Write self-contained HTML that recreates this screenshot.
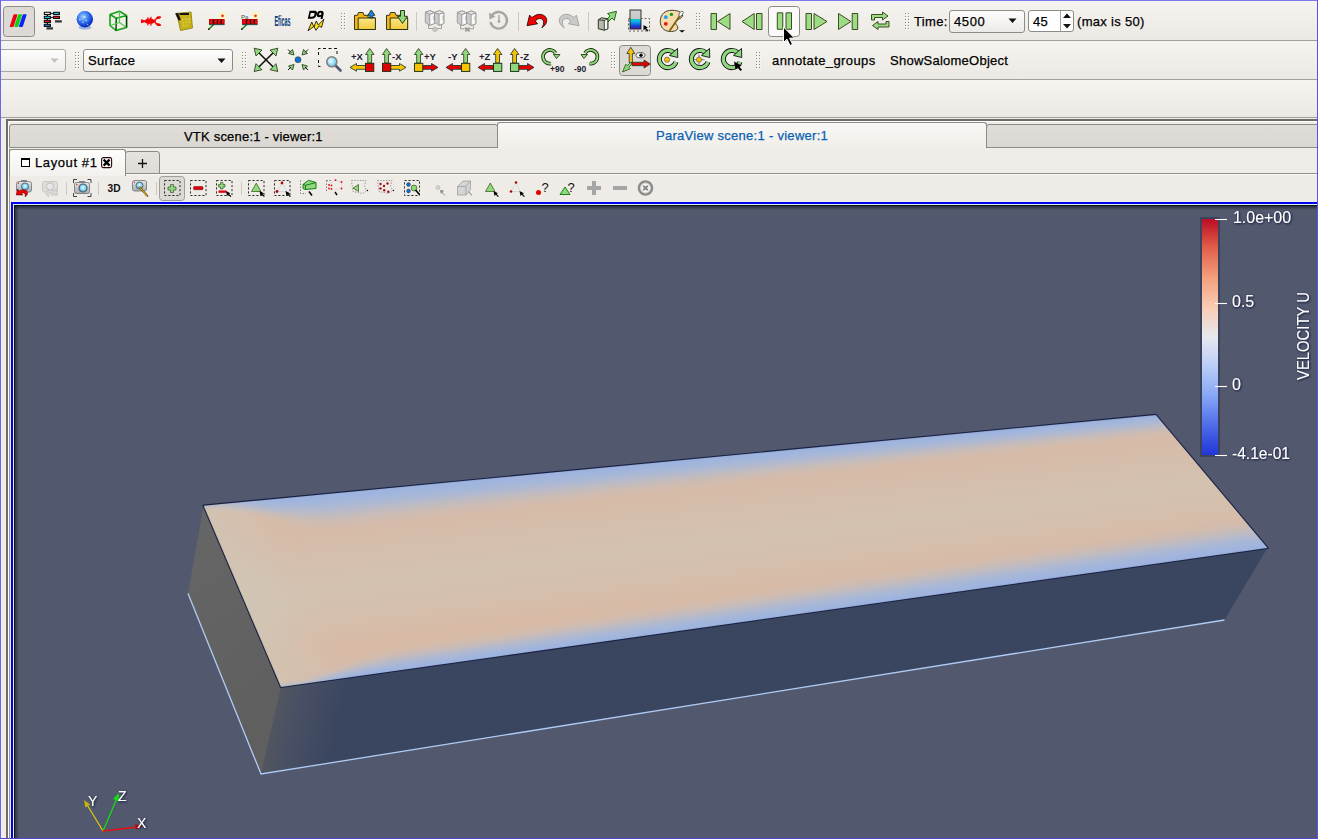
<!DOCTYPE html>
<html><head><meta charset="utf-8">
<style>
*{box-sizing:border-box;margin:0;padding:0}
html,body{width:1318px;height:839px;overflow:hidden;background:#f0ede8;font-family:"Liberation Sans",sans-serif;}
.a{position:absolute}
.tb{position:absolute;left:1px;right:1px;background:linear-gradient(#f6f4f0,#ece9e4)}
.hl{position:absolute;left:1px;right:1px;height:1px;background:#a3a09b}
.txt{position:absolute;font-size:13px;color:#000;white-space:nowrap;line-height:16px;-webkit-text-stroke:0.25px currentColor}
.grip{position:absolute;width:3px;background-image:radial-gradient(circle,#a8a59f 0.6px,transparent 0.9px);background-size:3px 3px}
.vsep{position:absolute;width:1px;background:#c9c6c0;box-shadow:1px 0 0 #fff}
svg{position:absolute;overflow:visible}
</style></head><body>
<!-- toolbar rows -->
<div class="tb" style="top:1px;height:39px"></div>
<div class="hl" style="top:40px"></div>
<div class="tb" style="top:41px;height:38px"></div>
<div class="hl" style="top:79px"></div>
<div class="tb" style="top:80px;height:37px"></div>
<div class="hl" style="top:117px"></div>

<!-- ROW1 ICONS -->
<svg class="a" style="left:0;top:0" width="1318" height="120" viewBox="0 0 1318 120">
<defs>
<radialGradient id="glb" cx="0.4" cy="0.35" r="0.7"><stop offset="0" stop-color="#a8d0ff"/><stop offset="0.45" stop-color="#3a7ef0"/><stop offset="0.85" stop-color="#0a30c8"/><stop offset="1" stop-color="#0818a0"/></radialGradient>
<linearGradient id="fold" x1="0" y1="0" x2="0" y2="1"><stop offset="0" stop-color="#fce68a"/><stop offset="1" stop-color="#f2cc3a"/></linearGradient>
<linearGradient id="cbi" x1="0" y1="0" x2="0" y2="1"><stop offset="0" stop-color="#d0d0d0"/><stop offset="0.45" stop-color="#c8c8c8"/><stop offset="0.47" stop-color="#10d0a0"/><stop offset="0.6" stop-color="#10b0f0"/><stop offset="0.85" stop-color="#1040d0"/><stop offset="1" stop-color="#6010a0"/></linearGradient>
<pattern id="grip" width="3" height="3" patternUnits="userSpaceOnUse"><rect x="0.5" y="0.5" width="1" height="1" fill="#a4a19b"/></pattern>
</defs>
<!-- active paraview button -->
<rect x="3.5" y="6.5" width="31" height="30" rx="3" fill="#dddad5" stroke="#8e8c88"/>
<g transform="skewX(-18)">
<rect x="18.3" y="14.3" width="4" height="12.8" rx="0.8" fill="#f00010"/>
<rect x="22.9" y="14.3" width="4" height="12.8" rx="0.8" fill="#10d010"/>
<rect x="27.5" y="14.3" width="4" height="12.8" rx="0.8" fill="#1020f8"/>
</g>
<!-- tree icon -->
<g fill="#111">
<rect x="46.5" y="27.3" width="6.5" height="2.2" opacity="0.85"/>
<rect x="55" y="20.3" width="6.8" height="2.2" opacity="0.85"/>
<rect x="43.8" y="11.8" width="7.2" height="3.2" rx="0.6"/><rect x="53" y="11.8" width="7" height="3.2" rx="0.6"/>
<rect x="43.8" y="15.8" width="7.2" height="3.2" rx="0.6"/><rect x="53" y="15.8" width="7" height="3.2" rx="0.6"/>
<rect x="43.8" y="19.8" width="7.2" height="3.2" rx="0.6"/>
<rect x="43.8" y="23.8" width="7.2" height="3.2" rx="0.6"/>
<rect x="50.5" y="12.9" width="3" height="1"/><rect x="50.5" y="16.9" width="3" height="1"/>
<rect x="46.8" y="14.5" width="1.2" height="10"/>
</g>
<rect x="45" y="12.8" width="4.8" height="1.2" fill="#e8e8e8"/><rect x="54.2" y="12.8" width="4.6" height="1.2" fill="#18c0f8"/>
<rect x="45" y="16.8" width="4.8" height="1.2" fill="#18c0f8"/><rect x="54.2" y="16.8" width="4.6" height="1.2" fill="#f81020"/>
<rect x="45" y="20.8" width="4.8" height="1.2" fill="#f81020"/>
<rect x="45" y="24.8" width="4.8" height="1.2" fill="#1070e0"/>
<!-- globe -->
<ellipse cx="85" cy="27.5" rx="6.5" ry="2" fill="#6890d8" opacity="0.6"/>
<circle cx="84.8" cy="19.3" r="8.2" fill="url(#glb)"/>
<g fill="#fff" opacity="0.85"><circle cx="84.6" cy="16.9" r="0.8"/><circle cx="79.8" cy="19.6" r="0.7"/><circle cx="86.3" cy="20.6" r="0.7"/><circle cx="83" cy="22.3" r="0.6"/><circle cx="87.7" cy="24.3" r="0.6"/></g>
<!-- wire cube -->
<g fill="none" stroke="#18a018" stroke-width="1.6" stroke-linejoin="round">
<polyline points="110,14.5 119.5,11.2 126.5,15.5 116.3,18.2 110,14.5 110,25.5 116,30.5 126.5,27.5 126.5,15.5"/>
<polyline points="116.3,18.2 116,30.5" stroke="#0a600a"/>
<polyline points="119.5,11.2 119.5,22.5 110,25.5" stroke="#50c850" stroke-width="1.2"/>
<line x1="119.5" y1="22.5" x2="126.5" y2="27.5" stroke="#50c850" stroke-width="1.2"/>
</g>
<line x1="126.6" y1="16" x2="126.6" y2="27.5" stroke="#063006" stroke-width="1.2"/>
<!-- lobster -->
<g fill="#f40000">
<path d="M141,19.3 L144.5,20.3 L147,19 L152.5,19.5 L155.5,21.2 L152.5,23 L147,23.5 L144.5,22.2 L141,23.2 Z"/>
<ellipse cx="150" cy="21.2" rx="4.2" ry="2.6"/>
<path d="M153.5,20.8 L155.5,18.5 L157.5,16.3 L160.5,16.3 L161.3,17.5 L159.5,18.8 L156.5,19.3 L155.5,21.3Z"/>
<path d="M153.5,21.6 L155.5,23.9 L157.5,26.1 L160.5,26.1 L161.3,24.9 L159.5,23.6 L156.5,23.1 L155.5,21.1Z"/>
<rect x="147.3" y="17.3" width="1.2" height="2"/><rect x="150.3" y="16.8" width="1.2" height="2.4"/><rect x="147.3" y="23.3" width="1.2" height="2"/><rect x="150.3" y="23.3" width="1.2" height="2.4"/>
</g>
<!-- calculator -->
<path d="M175.5,13.5 L191,12 L192.5,28 L180.5,30.5 L178,19 Z" fill="#c8b418" stroke="#8a7a08" stroke-width="0.8"/>
<path d="M175.5,13.5 L178,12.8 L181,20 L178.5,20.5Z" fill="#111"/>
<rect x="179.5" y="13" width="9.5" height="2" fill="#111"/>
<g fill="#e4d870" opacity="0.9"><rect x="182" y="19" width="1.5" height="1.2"/><rect x="185" y="18.7" width="1.5" height="1.2"/><rect x="188" y="18.4" width="1.5" height="1.2"/><rect x="182.5" y="22" width="1.5" height="1.2"/><rect x="185.5" y="21.7" width="1.5" height="1.2"/><rect x="188.5" y="21.4" width="1.5" height="1.2"/><rect x="183" y="25" width="1.5" height="1.2"/><rect x="186" y="24.7" width="1.5" height="1.2"/></g>
<!-- red bar icons -->
<g id="rb1">
<circle cx="222.5" cy="15.8" r="4" fill="#fff6b8" opacity="0.75"/>
<line x1="208.7" y1="29.3" x2="214" y2="24.3" stroke="#108010" stroke-width="1.5"/>
<circle cx="208.8" cy="29.3" r="0.8" fill="#000"/>
<rect x="209" y="19" width="15.6" height="5.4" fill="#d00008"/>
<g fill="#200000"><rect x="213.2" y="19" width="0.9" height="5.4"/><rect x="217.2" y="19" width="0.9" height="5.4"/><rect x="220.8" y="19" width="0.9" height="5.4"/><rect x="209" y="21.4" width="15.6" height="0.6" opacity="0.5"/></g>
<g fill="#ff2020" opacity="0.7"><circle cx="211" cy="21.5" r="1.2"/><circle cx="215.5" cy="21.5" r="1.1"/><circle cx="219" cy="21.5" r="1.1"/><circle cx="223" cy="21.5" r="1.1"/></g>
<rect x="209" y="24.2" width="15.6" height="0.9" fill="#104040"/>
<circle cx="222.5" cy="15.8" r="1.4" fill="#f03818"/>
</g>
<use href="#rb1" x="33"/>
<text x="241" y="18.5" font-family="Liberation Sans" font-weight="bold" font-size="6" fill="#708080">Pa</text>
<!-- Eficas -->
<text x="274.5" y="26" font-family="Liberation Sans" font-weight="bold" font-size="10.5" fill="#0a3a7a" textLength="16" lengthAdjust="spacingAndGlyphs" transform="translate(0,-9) scale(1,1.35)">Eficas</text>
<!-- DA -->
<path d="M309.6,10.8 L314.5,10.8 C317,10.8 317.3,12.5 316.8,14.5 C316.2,17 314.5,18.8 311.5,18.8 L307.8,18.8Z M310.8,13 L309.9,16.8 L311.8,16.8 C313.6,16.8 314.3,15.5 314.5,14.3 C314.7,13.3 314.3,13 313.3,13Z" fill="#000" fill-rule="evenodd"/><path d="M320.5,10.8 C323,10.8 324,12 323.6,14 L322.6,19 L320.5,19 L321,16.7 C320.5,17 319.8,17.2 319,17.2 C317,17.2 316.6,15.8 317,14 C317.4,12 318.5,10.8 320.5,10.8Z M320.3,12.8 C319.6,12.8 319.2,13.4 319.1,14 C319,14.7 319.2,15.2 319.9,15.2 C320.7,15.2 321.2,14.7 321.3,14 C321.4,13.3 321.1,12.8 320.3,12.8Z" fill="#000" fill-rule="evenodd"/>
<path d="M308,30.8 L311.8,22 L313.8,27 L316.3,21 L318.3,25 L323.8,19.3 L321.5,27.5 L319.2,25.8 L316,30.3 L313.8,26.5 Z" fill="#f8e010" stroke="#201800" stroke-width="0.9" stroke-linejoin="round"/>
<!-- grips row1 -->
<rect x="341" y="13" width="1" height="1" fill="#8c8a86"/><rect x="342" y="14" width="1" height="1" fill="#fff"/><rect x="344" y="13" width="1" height="1" fill="#8c8a86"/><rect x="345" y="14" width="1" height="1" fill="#fff"/><rect x="341" y="16" width="1" height="1" fill="#8c8a86"/><rect x="342" y="17" width="1" height="1" fill="#fff"/><rect x="344" y="16" width="1" height="1" fill="#8c8a86"/><rect x="345" y="17" width="1" height="1" fill="#fff"/><rect x="341" y="19" width="1" height="1" fill="#8c8a86"/><rect x="342" y="20" width="1" height="1" fill="#fff"/><rect x="344" y="19" width="1" height="1" fill="#8c8a86"/><rect x="345" y="20" width="1" height="1" fill="#fff"/><rect x="341" y="22" width="1" height="1" fill="#8c8a86"/><rect x="342" y="23" width="1" height="1" fill="#fff"/><rect x="344" y="22" width="1" height="1" fill="#8c8a86"/><rect x="345" y="23" width="1" height="1" fill="#fff"/><rect x="341" y="25" width="1" height="1" fill="#8c8a86"/><rect x="342" y="26" width="1" height="1" fill="#fff"/><rect x="344" y="25" width="1" height="1" fill="#8c8a86"/><rect x="345" y="26" width="1" height="1" fill="#fff"/><rect x="341" y="28" width="1" height="1" fill="#8c8a86"/><rect x="342" y="29" width="1" height="1" fill="#fff"/><rect x="344" y="28" width="1" height="1" fill="#8c8a86"/><rect x="345" y="29" width="1" height="1" fill="#fff"/><rect x="696" y="13" width="1" height="1" fill="#8c8a86"/><rect x="697" y="14" width="1" height="1" fill="#fff"/><rect x="699" y="13" width="1" height="1" fill="#8c8a86"/><rect x="700" y="14" width="1" height="1" fill="#fff"/><rect x="696" y="16" width="1" height="1" fill="#8c8a86"/><rect x="697" y="17" width="1" height="1" fill="#fff"/><rect x="699" y="16" width="1" height="1" fill="#8c8a86"/><rect x="700" y="17" width="1" height="1" fill="#fff"/><rect x="696" y="19" width="1" height="1" fill="#8c8a86"/><rect x="697" y="20" width="1" height="1" fill="#fff"/><rect x="699" y="19" width="1" height="1" fill="#8c8a86"/><rect x="700" y="20" width="1" height="1" fill="#fff"/><rect x="696" y="22" width="1" height="1" fill="#8c8a86"/><rect x="697" y="23" width="1" height="1" fill="#fff"/><rect x="699" y="22" width="1" height="1" fill="#8c8a86"/><rect x="700" y="23" width="1" height="1" fill="#fff"/><rect x="696" y="25" width="1" height="1" fill="#8c8a86"/><rect x="697" y="26" width="1" height="1" fill="#fff"/><rect x="699" y="25" width="1" height="1" fill="#8c8a86"/><rect x="700" y="26" width="1" height="1" fill="#fff"/><rect x="696" y="28" width="1" height="1" fill="#8c8a86"/><rect x="697" y="29" width="1" height="1" fill="#fff"/><rect x="699" y="28" width="1" height="1" fill="#8c8a86"/><rect x="700" y="29" width="1" height="1" fill="#fff"/><rect x="905" y="13" width="1" height="1" fill="#8c8a86"/><rect x="906" y="14" width="1" height="1" fill="#fff"/><rect x="908" y="13" width="1" height="1" fill="#8c8a86"/><rect x="909" y="14" width="1" height="1" fill="#fff"/><rect x="905" y="16" width="1" height="1" fill="#8c8a86"/><rect x="906" y="17" width="1" height="1" fill="#fff"/><rect x="908" y="16" width="1" height="1" fill="#8c8a86"/><rect x="909" y="17" width="1" height="1" fill="#fff"/><rect x="905" y="19" width="1" height="1" fill="#8c8a86"/><rect x="906" y="20" width="1" height="1" fill="#fff"/><rect x="908" y="19" width="1" height="1" fill="#8c8a86"/><rect x="909" y="20" width="1" height="1" fill="#fff"/><rect x="905" y="22" width="1" height="1" fill="#8c8a86"/><rect x="906" y="23" width="1" height="1" fill="#fff"/><rect x="908" y="22" width="1" height="1" fill="#8c8a86"/><rect x="909" y="23" width="1" height="1" fill="#fff"/><rect x="905" y="25" width="1" height="1" fill="#8c8a86"/><rect x="906" y="26" width="1" height="1" fill="#fff"/><rect x="908" y="25" width="1" height="1" fill="#8c8a86"/><rect x="909" y="26" width="1" height="1" fill="#fff"/><rect x="905" y="28" width="1" height="1" fill="#8c8a86"/><rect x="906" y="29" width="1" height="1" fill="#fff"/><rect x="908" y="28" width="1" height="1" fill="#8c8a86"/><rect x="909" y="29" width="1" height="1" fill="#fff"/>
<!-- folders -->
<g stroke="#1a2a10" stroke-width="0.9" stroke-linejoin="round">
<path d="M354.5,29.5 L354.5,15.3 L357.5,15.3 L358.5,12.5 L363,12.5 L364,15.3 L368,15.3 L368,17.8 L375.2,17.8 L375.2,29.5Z" fill="#f6b418"/>
<path d="M358.2,29.5 L358.2,18 L375.4,18 L375.4,29.5Z" fill="url(#fold)"/>
<path d="M371.3,10 L374.8,15.3 L372.7,15.3 L372.7,17.8 L369.9,17.8 L369.9,15.3 L367.8,15.3Z" fill="#1888f0"/>
<path d="M386.5,29.5 L386.5,15.3 L389.5,15.3 L390.5,12.5 L395,12.5 L396,15.3 L400,15.3 L400,17.8 L407.5,17.8 L407.5,29.5Z" fill="#f6b418"/>
<path d="M390.2,29.5 L390.2,18 L407.7,18 L407.7,29.5Z" fill="url(#fold)"/>
<path d="M400.5,10.5 L404.5,10.5 L404.5,16.3 L407.5,16.3 L402.5,23.5 L397.5,16.3 L400.5,16.3Z" fill="#90d880"/>
</g>
<!-- separators -->
<g stroke="#cbc8c2" stroke-width="1"><line x1="416.5" y1="12" x2="416.5" y2="31"/><line x1="518.5" y1="12" x2="518.5" y2="31"/><line x1="588.5" y1="12" x2="588.5" y2="31"/></g>
<!-- disabled servers -->
<g id="srv" stroke="#999" stroke-width="0.9" stroke-linejoin="round">
<polyline points="428.5,24.5 428.5,28.5 441.5,28.5 441.5,25" fill="none"/>
<path d="M434.6,12.5 L439.4,10.6 L443.8,12.5 L443.8,23.5 L439.1,25.3 L434.6,22.5Z" fill="#cbcbca"/>
<path d="M439.1,14.2 L443.8,12.5 L443.8,23.5 L439.1,25.3Z" fill="#f8f8f8"/>
<path d="M434.6,12.5 L439.4,10.6 L443.8,12.5 L439.1,14.2Z" fill="#e4e4e4"/>
<path d="M425.3,12.2 L430.1,10.6 L434.5,12.5 L434.5,23.5 L429.8,25.3 L425.3,22.5Z" fill="#cbcbca"/>
<path d="M429.8,14.2 L434.5,12.5 L434.5,23.5 L429.8,25.3Z" fill="#f8f8f8"/>
<path d="M425.3,12.2 L430.1,10.6 L434.5,12.5 L429.8,14.2Z" fill="#e4e4e4"/>
</g>
<g fill="#aaa"><rect x="433" y="16.3" width="1" height="1.2"/><rect x="433" y="18.3" width="1" height="1.2"/><rect x="442.3" y="16.3" width="1" height="1.2"/><rect x="442.3" y="18.3" width="1" height="1.2"/></g>
<circle cx="435" cy="29.3" r="2.3" fill="#c8c8c8" stroke="#aaa" stroke-width="0.6"/>
<use href="#srv" x="32" y="0.3"/>
<g fill="#aaa"><rect x="465" y="16.6" width="1" height="1.2"/><rect x="465" y="18.6" width="1" height="1.2"/><rect x="474.3" y="16.6" width="1" height="1.2"/><rect x="474.3" y="18.6" width="1" height="1.2"/></g>
<path d="M465.3,27.6 L469.7,31.4 M469.7,27.6 L465.3,31.4" stroke="#999" stroke-width="1.8"/>
<!-- timer reset -->
<path d="M491.5,16 A8.3,8.3 0 1 1 490.5,22" fill="none" stroke="#a6a6a6" stroke-width="2.4"/>
<path d="M489,12.5 L495.5,16.5 L489.5,19.5Z" fill="#a6a6a6"/>
<line x1="499" y1="15" x2="499" y2="21" stroke="#a6a6a6" stroke-width="1.4"/><circle cx="499" cy="21.5" r="1.4" fill="#a6a6a6"/>
<!-- undo -->
<path d="M527,25.7 L529.6,15.1 L532,17.6 C535,15 538.5,13.8 541.5,14.5 C545,15.3 547,18 546.7,21 C546.4,24 544,26.5 541.8,27.8 C543,26 544,23.5 543.5,21.2 C543,19.2 541,18.3 539,18.6 C537.5,18.9 536.3,19.8 535.3,21.2 L537.6,23.8 Z" fill="#f00000" stroke="#1a0000" stroke-width="0.8" stroke-linejoin="round"/>
<!-- redo -->
<path d="M 579.0 25.7 L 576.4 15.1 L 574.0 17.6 C 571.0 15.0 567.5 13.8 564.5 14.5 C 561.0 15.3 559.0 18.0 559.3 21.0 C 559.6 24.0 562.0 26.5 564.2 27.8 C 563.0 26.0 562.0 23.5 562.5 21.2 C 563.0 19.2 565.0 18.3 567.0 18.6 C 568.5 18.9 569.7 19.8 570.7 21.2 L 568.4 23.8 Z" fill="#cacaca" stroke="#9a9a9a" stroke-width="0.8" stroke-linejoin="round"/>
<!-- green arrow box -->
<path d="M603.5,22.5 L610,16 L607.5,13.5 L616.5,11.3 L614.3,20.3 L612,18 L605.5,24.5Z" fill="#90d880" stroke="#1a5a10" stroke-width="0.9" stroke-linejoin="round"/>
<path d="M598.3,19.8 L601.5,17.8 L607.8,18.8 L607.8,28.8 L604.3,30.2 L598.3,28.8Z" fill="#b8b8ac" stroke="#1a2a10" stroke-width="0.9" stroke-linejoin="round"/>
<path d="M604.3,20.5 L607.8,18.8 L607.8,28.8 L604.3,30.2Z" fill="#f8f8f8" stroke="#1a2a10" stroke-width="0.8" stroke-linejoin="round"/>
<path d="M598.3,19.8 L604.3,20.5" stroke="#1a2a10" stroke-width="0.8"/>
<!-- colorbar icon -->
<rect x="628.5" y="18.5" width="21" height="12.5" fill="none" stroke="#606060" stroke-dasharray="2,2"/>
<rect x="630" y="10" width="11" height="19" fill="url(#cbi)" stroke="#202020" stroke-width="0.9"/>
<path d="M643.5,25 L643.5,30.5 L645,29 L647.5,31.5 L648.5,30.5 L646,28 L648,27.5Z" fill="#000"/>
<!-- palette -->
<path d="M672,10.3 C679,10.3 683,13 682.5,16 C682,19 676,19 675.5,22 C675,25 679,26 677.5,29 C676,31.5 671,32 667,31 C662,29.5 660,25 660.3,20.5 C660.8,14 665,10.3 672,10.3Z" fill="#f6dcaa" stroke="#302818" stroke-width="0.9"/>
<circle cx="665.8" cy="17.2" r="1.9" fill="#20a0f0"/><circle cx="671.4" cy="14.4" r="1.7" fill="#10a020"/><circle cx="665.8" cy="23.8" r="1.9" fill="#f01010"/>
<line x1="669.5" y1="31" x2="680" y2="15.5" stroke="#806010" stroke-width="1.8"/>
<ellipse cx="681" cy="13.8" rx="1.6" ry="3" transform="rotate(35 681 13.8)" fill="#fff" stroke="#404040" stroke-width="0.7"/>
<path d="M679,30.3 L685,30.3 L682,32.5Z" fill="#000"/>
<!-- VCR -->
<g fill="#9cdc84" stroke="#2e3a10" stroke-width="0.9" stroke-linejoin="round">
<rect x="711" y="13.5" width="5.5" height="16"/><path d="M717.5,21.5 L730,13.5 L730,29.5Z"/>
<path d="M742,21.5 L754.2,13.5 L754.2,29.5Z"/><rect x="756.5" y="13.5" width="5.5" height="16"/>
</g>
<rect x="768.5" y="6.5" width="31" height="30" rx="3" fill="#fbfaf8" stroke="#8a8884"/>
<g fill="#9cdc84" stroke="#2e3a10" stroke-width="0.9" stroke-linejoin="round">
<rect x="777.3" y="12.8" width="5.5" height="16.5"/><rect x="786" y="12.8" width="5.5" height="16.5"/>
<rect x="806" y="13.5" width="5.5" height="16"/><path d="M814,13.5 L827,21.5 L814,29.5Z"/>
<path d="M838.5,13.5 L851,21.5 L838.5,29.5Z"/><rect x="852.2" y="13.5" width="5.5" height="16"/>
<path d="M871.5,20 L871.5,14.5 L882.5,14.5 L882.5,12 L888,16 L882.5,20 L882.5,17.5 L874.5,17.5 L874.5,20Z"/>
<path d="M889,21.5 L889,27 L878,27 L878,29.5 L872.5,25.5 L878,21.5 L878,24 L886,24 L886,21.5Z"/>
</g>
</svg>
<!-- time widgets -->
<div class="txt" style="left:914px;top:14px;letter-spacing:0.35px">Time:</div>
<div class="a" style="left:949px;top:10px;width:76px;height:23px;border:1px solid #8f8c86;border-radius:3px;background:linear-gradient(#fdfdfc,#eceae6)"></div>
<div class="txt" style="left:954px;top:14px;letter-spacing:0.6px">4500</div>
<svg class="a" style="left:1008px;top:18px" width="10" height="6"><path d="M0.5,0.5 L8.5,0.5 L4.5,5Z" fill="#111"/></svg>
<div class="a" style="left:1028px;top:10px;width:46px;height:22px;border:1px solid #8f8c86;border-radius:3px;background:#fff"></div>
<div class="a" style="left:1060px;top:11px;width:1px;height:20px;background:#a8a59f"></div>
<div class="txt" style="left:1033px;top:14px;letter-spacing:0.3px">45</div>
<svg class="a" style="left:1062px;top:12px" width="11" height="20"><path d="M1,6 L9,6 L5,1.5Z M1,12 L9,12 L5,16.5Z" fill="#111"/></svg>
<div class="txt" style="left:1077px;top:14px;letter-spacing:0.3px">(max is 50)</div>
<!-- cursor -->
<svg class="a" style="left:782px;top:26px" width="16" height="22" viewBox="0 0 16 22"><path d="M1.5,1 L1.5,16.5 L5,13.2 L8,19.5 L10.5,18.3 L7.6,12.2 L12.5,12.2Z" fill="#000" stroke="#fff" stroke-width="1" stroke-linejoin="round"/></svg>


<!-- ROW2 -->
<!-- left clipped combobox -->
<div class="a" style="left:-10px;top:49px;width:76px;height:23px;border:1px solid #a9a6a0;border-radius:3px;background:linear-gradient(#fdfdfc,#efedea)"></div>
<svg class="a" style="left:50px;top:58px" width="10" height="6"><path d="M0.5,0.5 L8.5,0.5 L4.5,5Z" fill="#c4c2be"/></svg>
<div class="a" style="left:83px;top:49px;width:150px;height:23px;border:1px solid #8f8c86;border-radius:3px;background:linear-gradient(#fefefe,#eeece8)"></div>
<div class="txt" style="left:88px;top:53px;letter-spacing:0.35px">Surface</div>
<svg class="a" style="left:217px;top:58px" width="10" height="6"><path d="M0.5,0.5 L8.5,0.5 L4.5,5Z" fill="#111"/></svg>
<div class="txt" style="left:772px;top:53px;letter-spacing:0.4px">annotate_groups</div>
<div class="txt" style="left:890px;top:53px;letter-spacing:0.25px">ShowSalomeObject</div>
<svg class="a" style="left:0;top:0" width="1318" height="120" viewBox="0 0 1318 120">
<defs>
<pattern id="grip2" width="3" height="3" patternUnits="userSpaceOnUse"><rect x="0.5" y="0.5" width="1" height="1" fill="#a4a19b"/></pattern>
<radialGradient id="mag" cx="0.4" cy="0.4" r="0.6"><stop offset="0" stop-color="#f0fcff"/><stop offset="1" stop-color="#60c8f8"/></radialGradient>
</defs>
<rect x="75" y="52" width="1" height="1" fill="#8c8a86"/><rect x="76" y="53" width="1" height="1" fill="#fff"/><rect x="78" y="52" width="1" height="1" fill="#8c8a86"/><rect x="79" y="53" width="1" height="1" fill="#fff"/><rect x="75" y="55" width="1" height="1" fill="#8c8a86"/><rect x="76" y="56" width="1" height="1" fill="#fff"/><rect x="78" y="55" width="1" height="1" fill="#8c8a86"/><rect x="79" y="56" width="1" height="1" fill="#fff"/><rect x="75" y="58" width="1" height="1" fill="#8c8a86"/><rect x="76" y="59" width="1" height="1" fill="#fff"/><rect x="78" y="58" width="1" height="1" fill="#8c8a86"/><rect x="79" y="59" width="1" height="1" fill="#fff"/><rect x="75" y="61" width="1" height="1" fill="#8c8a86"/><rect x="76" y="62" width="1" height="1" fill="#fff"/><rect x="78" y="61" width="1" height="1" fill="#8c8a86"/><rect x="79" y="62" width="1" height="1" fill="#fff"/><rect x="75" y="64" width="1" height="1" fill="#8c8a86"/><rect x="76" y="65" width="1" height="1" fill="#fff"/><rect x="78" y="64" width="1" height="1" fill="#8c8a86"/><rect x="79" y="65" width="1" height="1" fill="#fff"/><rect x="75" y="67" width="1" height="1" fill="#8c8a86"/><rect x="76" y="68" width="1" height="1" fill="#fff"/><rect x="78" y="67" width="1" height="1" fill="#8c8a86"/><rect x="79" y="68" width="1" height="1" fill="#fff"/><rect x="242" y="52" width="1" height="1" fill="#8c8a86"/><rect x="243" y="53" width="1" height="1" fill="#fff"/><rect x="245" y="52" width="1" height="1" fill="#8c8a86"/><rect x="246" y="53" width="1" height="1" fill="#fff"/><rect x="242" y="55" width="1" height="1" fill="#8c8a86"/><rect x="243" y="56" width="1" height="1" fill="#fff"/><rect x="245" y="55" width="1" height="1" fill="#8c8a86"/><rect x="246" y="56" width="1" height="1" fill="#fff"/><rect x="242" y="58" width="1" height="1" fill="#8c8a86"/><rect x="243" y="59" width="1" height="1" fill="#fff"/><rect x="245" y="58" width="1" height="1" fill="#8c8a86"/><rect x="246" y="59" width="1" height="1" fill="#fff"/><rect x="242" y="61" width="1" height="1" fill="#8c8a86"/><rect x="243" y="62" width="1" height="1" fill="#fff"/><rect x="245" y="61" width="1" height="1" fill="#8c8a86"/><rect x="246" y="62" width="1" height="1" fill="#fff"/><rect x="242" y="64" width="1" height="1" fill="#8c8a86"/><rect x="243" y="65" width="1" height="1" fill="#fff"/><rect x="245" y="64" width="1" height="1" fill="#8c8a86"/><rect x="246" y="65" width="1" height="1" fill="#fff"/><rect x="242" y="67" width="1" height="1" fill="#8c8a86"/><rect x="243" y="68" width="1" height="1" fill="#fff"/><rect x="245" y="67" width="1" height="1" fill="#8c8a86"/><rect x="246" y="68" width="1" height="1" fill="#fff"/><rect x="611" y="52" width="1" height="1" fill="#8c8a86"/><rect x="612" y="53" width="1" height="1" fill="#fff"/><rect x="614" y="52" width="1" height="1" fill="#8c8a86"/><rect x="615" y="53" width="1" height="1" fill="#fff"/><rect x="611" y="55" width="1" height="1" fill="#8c8a86"/><rect x="612" y="56" width="1" height="1" fill="#fff"/><rect x="614" y="55" width="1" height="1" fill="#8c8a86"/><rect x="615" y="56" width="1" height="1" fill="#fff"/><rect x="611" y="58" width="1" height="1" fill="#8c8a86"/><rect x="612" y="59" width="1" height="1" fill="#fff"/><rect x="614" y="58" width="1" height="1" fill="#8c8a86"/><rect x="615" y="59" width="1" height="1" fill="#fff"/><rect x="611" y="61" width="1" height="1" fill="#8c8a86"/><rect x="612" y="62" width="1" height="1" fill="#fff"/><rect x="614" y="61" width="1" height="1" fill="#8c8a86"/><rect x="615" y="62" width="1" height="1" fill="#fff"/><rect x="611" y="64" width="1" height="1" fill="#8c8a86"/><rect x="612" y="65" width="1" height="1" fill="#fff"/><rect x="614" y="64" width="1" height="1" fill="#8c8a86"/><rect x="615" y="65" width="1" height="1" fill="#fff"/><rect x="611" y="67" width="1" height="1" fill="#8c8a86"/><rect x="612" y="68" width="1" height="1" fill="#fff"/><rect x="614" y="67" width="1" height="1" fill="#8c8a86"/><rect x="615" y="68" width="1" height="1" fill="#fff"/><rect x="756" y="52" width="1" height="1" fill="#8c8a86"/><rect x="757" y="53" width="1" height="1" fill="#fff"/><rect x="759" y="52" width="1" height="1" fill="#8c8a86"/><rect x="760" y="53" width="1" height="1" fill="#fff"/><rect x="756" y="55" width="1" height="1" fill="#8c8a86"/><rect x="757" y="56" width="1" height="1" fill="#fff"/><rect x="759" y="55" width="1" height="1" fill="#8c8a86"/><rect x="760" y="56" width="1" height="1" fill="#fff"/><rect x="756" y="58" width="1" height="1" fill="#8c8a86"/><rect x="757" y="59" width="1" height="1" fill="#fff"/><rect x="759" y="58" width="1" height="1" fill="#8c8a86"/><rect x="760" y="59" width="1" height="1" fill="#fff"/><rect x="756" y="61" width="1" height="1" fill="#8c8a86"/><rect x="757" y="62" width="1" height="1" fill="#fff"/><rect x="759" y="61" width="1" height="1" fill="#8c8a86"/><rect x="760" y="62" width="1" height="1" fill="#fff"/><rect x="756" y="64" width="1" height="1" fill="#8c8a86"/><rect x="757" y="65" width="1" height="1" fill="#fff"/><rect x="759" y="64" width="1" height="1" fill="#8c8a86"/><rect x="760" y="65" width="1" height="1" fill="#fff"/><rect x="756" y="67" width="1" height="1" fill="#8c8a86"/><rect x="757" y="68" width="1" height="1" fill="#fff"/><rect x="759" y="67" width="1" height="1" fill="#8c8a86"/><rect x="760" y="68" width="1" height="1" fill="#fff"/>
<!-- expand -->
<g stroke="#111" stroke-width="1.6"><line x1="257" y1="51" x2="275" y2="68.7"/><line x1="275" y1="51" x2="257" y2="68.7"/></g>
<g fill="#90d880" stroke="#203010" stroke-width="0.8" stroke-linejoin="round">
<path d="M254.2,48.2 L262,50 L256,56Z"/><path d="M277.8,48.2 L276,56 L270,50Z"/>
<path d="M254.2,71.5 L256,63.7 L262,69.7Z"/><path d="M277.8,71.5 L270,69.7 L276,63.7Z"/>
</g>
<!-- compress -->
<circle cx="298" cy="59.7" r="3" fill="#1070d8" stroke="#304020" stroke-width="0.6"/>
<g fill="#90d880" stroke="#203010" stroke-width="0.8" stroke-linejoin="round">
<path d="M294,55 L288.5,53.5 L292.5,49.5Z"/><path d="M302,55 L303.5,49.5 L307.5,53.5Z"/>
<path d="M294,64.5 L292.5,70 L288.5,66Z"/><path d="M302,64.5 L307.5,66 L303.5,70Z"/>
</g>
<g stroke="#111" stroke-width="1"><line x1="288" y1="49.5" x2="291" y2="52.5"/><line x1="308" y1="49.5" x2="305" y2="52.5"/><line x1="288" y1="70" x2="291" y2="67"/><line x1="308" y1="70" x2="305" y2="67"/></g>
<!-- zoom to box -->
<path d="M318.5,55 L318.5,48.5 L337,48.5 L337,55 M318.5,60 L318.5,66.5 L323,66.5" fill="none" stroke="#111" stroke-width="1" stroke-dasharray="3,2.5"/>
<line x1="335" y1="65" x2="340.5" y2="70.5" stroke="#505870" stroke-width="2.6" stroke-linecap="round"/>
<circle cx="331.8" cy="61.8" r="5" fill="url(#mag)" stroke="#808080" stroke-width="1.6"/>
<!-- view direction icons -->
<g id="vdx">
<path d="M367.8,63 L367.8,54.5 L365.5,54.5 L369.7,48.5 L374,54.5 L371.6,54.5 L371.6,63Z" fill="#90d880" stroke="#283010" stroke-width="0.8" stroke-linejoin="round"/>
<path d="M365.5,65.5 L356.5,65.5 L356.5,63.5 L350,67.4 L356.5,71.2 L356.5,69.3 L365.5,69.3Z" fill="#f8c400" stroke="#103030" stroke-width="0.8" stroke-linejoin="round"/>
<rect x="365.5" y="63.3" width="8.3" height="8.1" fill="#e00000" stroke="#102810" stroke-width="0.9"/>
</g>
<text x="351" y="59.5" font-family="Liberation Sans" font-weight="bold" font-size="9.5" fill="#202030">+X</text>
<!-- -X -->
<path d="M384.7,63 L384.7,54.5 L382.4,54.5 L386.6,48.5 L390.9,54.5 L388.5,54.5 L388.5,63Z" fill="#90d880" stroke="#283010" stroke-width="0.8" stroke-linejoin="round"/>
<path d="M390.5,65.5 L399.5,65.5 L399.5,63.5 L406,67.4 L399.5,71.2 L399.5,69.3 L390.5,69.3Z" fill="#f8c400" stroke="#103030" stroke-width="0.8" stroke-linejoin="round"/>
<rect x="382.5" y="63.3" width="8.3" height="8.1" fill="#e00000" stroke="#102810" stroke-width="0.9"/>
<text x="392" y="59.5" font-family="Liberation Sans" font-weight="bold" font-size="9.5" fill="#202030">-X</text>
<!-- +Y -->
<path d="M416.7,63 L416.7,54.5 L414.4,54.5 L418.6,48.5 L422.9,54.5 L420.5,54.5 L420.5,63Z" fill="#90d880" stroke="#283010" stroke-width="0.8" stroke-linejoin="round"/>
<path d="M422.5,65.5 L431.5,65.5 L431.5,63.5 L438,67.4 L431.5,71.2 L431.5,69.3 L422.5,69.3Z" fill="#e80000" stroke="#103030" stroke-width="0.8" stroke-linejoin="round"/>
<rect x="414.5" y="63.3" width="8.3" height="8.1" fill="#f8c400" stroke="#102810" stroke-width="0.9"/>
<text x="424" y="59.5" font-family="Liberation Sans" font-weight="bold" font-size="9.5" fill="#202030">+Y</text>
<!-- -Y -->
<path d="M463.7,63 L463.7,54.5 L461.4,54.5 L465.6,48.5 L469.9,54.5 L467.5,54.5 L467.5,63Z" fill="#90d880" stroke="#283010" stroke-width="0.8" stroke-linejoin="round"/>
<path d="M461.5,65.5 L452.5,65.5 L452.5,63.5 L446,67.4 L452.5,71.2 L452.5,69.3 L461.5,69.3Z" fill="#e80000" stroke="#103030" stroke-width="0.8" stroke-linejoin="round"/>
<rect x="461.5" y="63.3" width="8.3" height="8.1" fill="#f8c400" stroke="#102810" stroke-width="0.9"/>
<text x="448" y="59.5" font-family="Liberation Sans" font-weight="bold" font-size="9.5" fill="#202030">-Y</text>
<!-- +Z -->
<path d="M495.7,63 L495.7,54.5 L493.4,54.5 L497.6,48.5 L501.9,54.5 L499.5,54.5 L499.5,63Z" fill="#f8c400" stroke="#102830" stroke-width="0.8" stroke-linejoin="round"/>
<path d="M493.5,65.5 L484.5,65.5 L484.5,63.5 L478,67.4 L484.5,71.2 L484.5,69.3 L493.5,69.3Z" fill="#e80000" stroke="#103030" stroke-width="0.8" stroke-linejoin="round"/>
<rect x="493.5" y="63.3" width="8.3" height="8.1" fill="#90d880" stroke="#102810" stroke-width="0.9"/>
<text x="479" y="59.5" font-family="Liberation Sans" font-weight="bold" font-size="9.5" fill="#202030">+Z</text>
<!-- -Z -->
<path d="M512.7,63 L512.7,54.5 L510.4,54.5 L514.6,48.5 L518.9,54.5 L516.5,54.5 L516.5,63Z" fill="#f8c400" stroke="#102830" stroke-width="0.8" stroke-linejoin="round"/>
<path d="M518.5,65.5 L527.5,65.5 L527.5,63.5 L534,67.4 L527.5,71.2 L527.5,69.3 L518.5,69.3Z" fill="#e80000" stroke="#103030" stroke-width="0.8" stroke-linejoin="round"/>
<rect x="510.5" y="63.3" width="8.3" height="8.1" fill="#90d880" stroke="#102810" stroke-width="0.9"/>
<text x="520" y="59.5" font-family="Liberation Sans" font-weight="bold" font-size="9.5" fill="#202030">-Z</text>
<!-- +90 / -90 -->
<g fill="none" stroke="#1a2a08" stroke-width="3.8"><path d="M555.5,53 A6.8,6.8 0 1 0 551,63.5"/><path d="M585,53 A6.8,6.8 0 1 1 589.5,63.5"/></g>
<g fill="none" stroke="#90d880" stroke-width="2.1"><path d="M555.5,53 A6.8,6.8 0 1 0 551,63.5"/><path d="M585,53 A6.8,6.8 0 1 1 589.5,63.5"/></g>
<path d="M553.5,54.5 L560,54.5 L556.5,58.5Z" fill="#90d880" stroke="#1a2a08" stroke-width="0.8" stroke-linejoin="round"/>
<path d="M581,54.5 L587.5,54.5 L584,58.5Z" fill="#90d880" stroke="#1a2a08" stroke-width="0.8" stroke-linejoin="round"/>
<text x="550" y="71.5" font-family="Liberation Sans" font-weight="bold" font-size="8.5" fill="#202030">+90</text>
<text x="574" y="71.5" font-family="Liberation Sans" font-weight="bold" font-size="8.5" fill="#202030">-90</text>
<!-- active axes button -->
<rect x="619.5" y="45.5" width="31" height="30" rx="3" fill="#dddad5" stroke="#8e8c88"/>
<path d="M629.2,62.5 L629.2,53.5 L626.8,53.5 L630.8,47.3 L634.8,53.5 L632.4,53.5 L632.4,62.5Z" fill="#f8c400" stroke="#203040" stroke-width="0.8" stroke-linejoin="round"/>
<path d="M632,62.3 L644,62.3 L644,60 L650.3,64 L644,68 L644,65.7 L632,65.7Z" fill="#e80000" stroke="#104030" stroke-width="0.8" stroke-linejoin="round"/>
<path d="M630.5,62.5 L627.3,65.7 L625.8,64.2 L622.5,72 L630.3,68.7 L628.8,67.2 L632,64Z" fill="#90d880" stroke="#205010" stroke-width="0.8" stroke-linejoin="round"/>
<ellipse cx="640.5" cy="55.2" rx="4.5" ry="2.6" fill="#fff" stroke="#303030" stroke-width="0.8"/><circle cx="641" cy="55.2" r="1.7" fill="#000"/>
<!-- rotation center icons -->
<g id="rot">
<path d="M673.5,52.5 A8.6,8.6 0 1 0 676,62" fill="none" stroke="#111" stroke-width="5"/>
<path d="M673.5,52.5 A8.6,8.6 0 1 0 676,62" fill="none" stroke="#90d880" stroke-width="3.2"/>
<path d="M669.5,55.5 L677.5,48.5 L677.8,57.5Z" fill="#90d880" stroke="#111" stroke-width="0.9" stroke-linejoin="round"/>
</g>
<circle cx="667" cy="59.7" r="2.6" fill="#f8c000" stroke="#405060" stroke-width="0.6"/>
<use href="#rot" x="32"/>
<g stroke="#6a7a80" stroke-width="1"><line x1="699" y1="54.5" x2="699" y2="65"/><line x1="693.5" y1="59.7" x2="704.5" y2="59.7"/></g>
<circle cx="699" cy="59.7" r="2.6" fill="#f8c000" stroke="#405060" stroke-width="0.6"/>
<use href="#rot" x="64"/>
<path d="M734,61.5 L735.5,69.5 L737.5,67.5 L740.5,71 L742,69.8 L739,66.3 L741.8,65.8Z" fill="#000"/>
</svg>


<!-- central frame -->
<div class="a" style="left:6px;top:119px;width:1311px;height:719px;border-left:2px solid #6e6c68;border-top:2px solid #6e6c68;background:#efece7"></div>
<div class="a" style="left:8px;top:121px;width:1309px;height:717px;border-left:1px solid #fff;border-top:1px solid #fff"></div>

<!-- tab bar -->
<!-- content bg -->
<div class="a" style="left:9px;top:148px;width:1308px;height:54px;background:#efede8"></div>
<!-- VTK tab -->
<div class="a" style="left:9px;top:124px;width:489px;height:24px;border:1px solid #8d8b87;border-radius:3px 3px 0 0;background:linear-gradient(#e0ddd8,#dbd8d3)"></div>
<div class="txt" style="left:184px;top:129px;letter-spacing:0.2px">VTK scene:1 - viewer:1</div>
<!-- third tab -->
<div class="a" style="left:986px;top:124px;width:340px;height:24px;border:1px solid #8d8b87;border-radius:3px 0 0 0;background:linear-gradient(#e0ddd8,#dbd8d3)"></div>
<!-- ParaView tab active -->
<div class="a" style="left:497px;top:122px;width:490px;height:26px;border:1px solid #8d8b87;border-bottom:none;border-radius:3px 3px 0 0;background:linear-gradient(#f9f8f5,#f0eee9)"></div>
<div class="a" style="left:498px;top:147px;width:488px;height:2px;background:#f0eee9"></div>
<div class="txt" style="left:656px;top:128px;letter-spacing:0.28px;color:#0a5fb4">ParaView scene:1 - viewer:1</div>
<!-- layout tab bar -->
<div class="a" style="left:9px;top:149px;width:1px;height:690px;background:#9a9894"></div>
<div class="a" style="left:159px;top:173px;width:1158px;height:1px;background:#94928e"></div>
<div class="a" style="left:10px;top:174px;width:1307px;height:1px;background:#fbfaf8"></div>
<div class="a" style="left:125px;top:151px;width:35px;height:23px;border:1px solid #8d8b87;border-radius:3px 3px 0 0;background:linear-gradient(#e6e3de,#dfdcd7)"></div>
<svg class="a" style="left:137px;top:158px" width="11" height="11"><path d="M5.5,1 V10 M1,5.5 H10" stroke="#111" stroke-width="1.3"/></svg>
<div class="a" style="left:9px;top:149px;width:117px;height:27px;border:1px solid #8d8b87;border-bottom:none;border-radius:3px 3px 0 0;background:linear-gradient(#fdfdfc,#f3f1ed)"></div>
<div class="a" style="left:21px;top:158px;width:9px;height:9px;border:1.5px solid #000;border-top-width:2px;background:#fff"></div>
<div class="txt" style="left:35px;top:155px;letter-spacing:0.6px">Layout #1</div>
<svg class="a" style="left:100px;top:156px" width="13" height="13"><rect x="1.6" y="1.6" width="10" height="10" rx="1.8" fill="#fff" stroke="#2a0808" stroke-width="1.1"/><path d="M3.6,3.6 L9.6,9.6 M9.6,3.6 L3.6,9.6" stroke="#000" stroke-width="2.3"/></svg>
<!-- view toolbar band -->
<div class="a" style="left:10px;top:176px;width:1307px;height:26px;background:#efece7"></div>

<svg class="a" style="left:0;top:0" width="1318" height="210" viewBox="0 0 1318 210">
<defs>
<radialGradient id="lens" cx="0.5" cy="0.45" r="0.55"><stop offset="0" stop-color="#e8fcff"/><stop offset="0.6" stop-color="#7cd4f8"/><stop offset="1" stop-color="#3a90c0"/></radialGradient>
<linearGradient id="cam" x1="0" y1="0" x2="0" y2="1"><stop offset="0" stop-color="#e4e6e8"/><stop offset="1" stop-color="#a8aeb4"/></linearGradient>
</defs>
<!-- camera undo -->
<rect x="16.5" y="181.5" width="15" height="10.5" rx="2" fill="url(#cam)" stroke="#707478" stroke-width="0.8"/>
<rect x="21" y="180" width="6" height="2" fill="#808488"/>
<circle cx="25" cy="186.5" r="3.6" fill="url(#lens)" stroke="#6a6e72" stroke-width="1"/>
<circle cx="18.5" cy="183.2" r="0.7" fill="#f00"/>
<path d="M16.2,195 L17.5,189 L19.5,191 C22,189 27,189.5 27.5,192.5 C27.8,194.5 26.5,196 25,196.8 C25.5,195 25.5,193.5 23.5,193 C22,192.7 21.5,193.3 21.5,193.5 L23,195Z" fill="#f00000" stroke="#400000" stroke-width="0.5"/>
<!-- camera redo disabled -->
<g opacity="0.55">
<rect x="42.5" y="181.5" width="15" height="10.5" rx="2" fill="#d4d4d4" stroke="#9a9a9a" stroke-width="0.8"/>
<circle cx="50" cy="186.5" r="3.6" fill="#e4e4e4" stroke="#9a9a9a" stroke-width="1"/>
<path d="M57.5,195 L56.2,189 L54.2,191 C51.7,189 46.7,189.5 46.2,192.5 C45.9,194.5 47.2,196 48.7,196.8 C48.2,195 48.2,193.5 50.2,193 C51.7,192.7 52.2,193.3 52.2,193.5 L50.7,195Z" fill="#c8c8c8" stroke="#909090" stroke-width="0.6"/>
</g>
<g stroke="#cbc8c2"><line x1="66.5" y1="182" x2="66.5" y2="195"/><line x1="98.5" y1="182" x2="98.5" y2="195"/><line x1="156.5" y1="182" x2="156.5" y2="195"/><line x1="241.5" y1="182" x2="241.5" y2="195"/></g>
<!-- screenshot camera -->
<path d="M73.5,183 V179.5 H77 M87.5,179.5 H91 V183 M91,193 V196.5 H87.5 M77,196.5 H73.5 V193" fill="none" stroke="#404040" stroke-width="1"/>
<rect x="74.5" y="182.5" width="15" height="11" rx="2" fill="url(#cam)" stroke="#6a6e72" stroke-width="0.8"/>
<rect x="79" y="181" width="6" height="2" fill="#808488"/>
<circle cx="83" cy="188" r="4" fill="url(#lens)" stroke="#5a5e62" stroke-width="1.2"/>
<circle cx="76.8" cy="184.5" r="0.7" fill="#f00"/>
<!-- 3D -->
<text x="107.5" y="192" font-family="Liberation Sans" font-weight="bold" font-size="10.5" fill="#111" textLength="13" lengthAdjust="spacingAndGlyphs">3D</text>
<!-- camera pencil -->
<rect x="132.5" y="180.5" width="14" height="10.5" rx="2" fill="url(#cam)" stroke="#6a6e72" stroke-width="0.8"/>
<circle cx="139.5" cy="185.5" r="3.5" fill="url(#lens)" stroke="#6a6e72" stroke-width="1"/>
<circle cx="134.5" cy="182.2" r="0.6" fill="#f00"/>
<path d="M140,186.5 L147.5,195 L148,196.5 L146.5,196 L139,187.5Z" fill="#e8b010" stroke="#403000" stroke-width="0.6"/>
<!-- active select button -->
<rect x="159.5" y="176.5" width="25" height="24" rx="3" fill="#dddad5" stroke="#a09e9a"/>
<g fill="none" stroke="#303030" stroke-width="1" stroke-dasharray="2.2,1.8">
<rect x="164.5" y="180.5" width="15.5" height="15"/>
<rect x="190.5" y="180.5" width="15.5" height="15"/>
<rect x="216.5" y="180.5" width="15.5" height="15"/>
<rect x="248.5" y="180.5" width="15.5" height="15"/>
<rect x="274.5" y="180.5" width="15.5" height="15"/>
<rect x="404.5" y="180.5" width="15" height="15"/>
</g>
<path d="M170.5,184.5 H173.5 V187 H176 V190 H173.5 V192.5 H170.5 V190 H168 V187 H170.5Z" fill="#90d880" stroke="#204010" stroke-width="0.6"/>
<rect x="193.5" y="186.5" width="9.5" height="3.2" rx="1" fill="#e00010" stroke="#600" stroke-width="0.5"/>
<path d="M220.5,182.5 H223 V184.5 H225 V187 H223 V189 H220.5 V187 H218.5 V184.5 H220.5Z" fill="#90d880" stroke="#204010" stroke-width="0.6"/>
<rect x="218.5" y="190.5" width="8" height="2.3" fill="#e00010"/>
<path d="M226,191 L227,196 L228.2,194.8 L230.5,197 L231.3,196.2 L229,194 L230.5,193.2Z" fill="#000"/>
<!-- triangle select -->
<path d="M251.5,191.5 L256.3,183.2 L261,191.5Z" fill="#90d880" stroke="#305010" stroke-width="0.7"/>
<path d="M259.5,191 L260.5,196 L261.7,194.8 L264,197 L264.8,196.2 L262.5,194 L264,193.2Z" fill="#000"/>
<!-- point select -->
<path d="M282,183 L277,191.5 L287,191.5Z" fill="none" stroke="#c0c8d0" stroke-width="0.5"/>
<circle cx="282" cy="183" r="1.4" fill="#a80808"/><circle cx="277" cy="191.5" r="1.4" fill="#a80808"/>
<path d="M285.5,191 L286.5,196 L287.7,194.8 L290,197 L290.8,196.2 L288.5,194 L290,193.2Z" fill="#000"/>
<!-- block select -->
<path d="M300.5,180.5 V193.5 H306" fill="none" stroke="#606060" stroke-width="0.8" stroke-dasharray="1.5,1.5"/>
<path d="M303,184.5 L308.5,180.3 L316,182.5 L316,188.5 L305.5,189.5 L303,188.5Z" fill="#90d880" stroke="#108010" stroke-width="1" stroke-linejoin="round"/>
<path d="M303,184.5 L305.5,185.3 L316,182.5 M305.5,185.3 V189.5" fill="none" stroke="#0a700a" stroke-width="0.9"/>
<path d="M309,191.5 L312,195.5" stroke="#000" stroke-width="1.6"/>
<!-- points in box -->
<path d="M326.5,180.5 V192.5 M326.5,180.5 H331" fill="none" stroke="#606060" stroke-width="0.8" stroke-dasharray="1.5,1.5"/>
<path d="M329,184.5 L335,180 L341.5,182 L341.5,188.5 L335,189.5" fill="none" stroke="#d0d4d8" stroke-width="0.6"/>
<g fill="#e81010"><circle cx="329" cy="185" r="0.9"/><circle cx="331.5" cy="185.5" r="0.9"/><circle cx="329" cy="188.5" r="0.9"/><circle cx="331.5" cy="189" r="0.9"/><circle cx="335.5" cy="180.2" r="0.9"/><circle cx="341.5" cy="182" r="0.9"/><circle cx="341.5" cy="188.5" r="0.9"/></g>
<line x1="335" y1="192" x2="337" y2="195" stroke="#000" stroke-width="1.4"/>
<!-- polygon select -->
<path d="M351.5,180.5 L366,180.5 L364.5,186 L366.5,190.5 L362.5,193.5 L353,191.5 Z" fill="none" stroke="#707070" stroke-width="0.7" stroke-dasharray="1.4,1.4"/>
<path d="M353,188.2 L358.5,184.5 L358.5,191.5Z" fill="#90d880" stroke="#305010" stroke-width="0.7"/>
<circle cx="367.5" cy="190.5" r="0.7" fill="#000"/>
<!-- polygon points -->
<path d="M377.5,180.5 L392,180.5 L390.5,186 L392.5,190.5 L388.5,193.5 L379,191.5 Z" fill="none" stroke="#707070" stroke-width="0.7" stroke-dasharray="1.4,1.4"/>
<g fill="#a01010"><circle cx="380.5" cy="184" r="1.2"/><circle cx="387.5" cy="183.5" r="1.2"/><circle cx="384" cy="186" r="1.2"/><circle cx="380.5" cy="188.5" r="1.2"/><circle cx="384.2" cy="190.2" r="1.2"/><circle cx="388.3" cy="191.7" r="1.2"/></g>
<circle cx="393.5" cy="190.5" r="0.7" fill="#000"/>
<!-- interactive select -->
<circle cx="408.5" cy="184.5" r="1.9" fill="#1070d0" stroke="#203040" stroke-width="0.5"/>
<circle cx="408.5" cy="191" r="1.9" fill="#1070d0" stroke="#203040" stroke-width="0.5"/>
<circle cx="414" cy="188" r="2.9" fill="#90d880" stroke="#305010" stroke-width="0.7"/>
<path d="M415.5,190 L419.5,194.5" stroke="#000" stroke-width="1.6"/>
<!-- grayed point pick -->
<circle cx="438" cy="187.5" r="1.9" fill="#d8d8d8" stroke="#a8a8a8" stroke-width="0.6"/>
<path d="M445,195.5 L441,191.5 M440.5,190.5 L443.5,191 L441.2,193.2Z" stroke="#909090" stroke-width="1" fill="#909090"/>
<!-- gray cube -->
<path d="M457.5,186.5 L463,181 L470.5,181 L470.5,189.5 L466,195 L457.5,195Z" fill="#d4d4d4" stroke="#a0a0a0" stroke-width="0.8"/>
<path d="M457.5,186.5 L466,186.5 L470.5,181 M466,186.5 V195" fill="none" stroke="#a0a0a0" stroke-width="0.8"/>
<path d="M472,195.5 L468.5,191.5" stroke="#909090" stroke-width="1.1"/>
<!-- green triangle pick -->
<path d="M485.5,191.5 L490.3,183 L495,191.5Z" fill="#90d880" stroke="#305010" stroke-width="0.7"/>
<path d="M493.5,191 L494.5,196 L495.7,194.8 L498,197 L498.8,196.2 L496.5,194 L498,193.2Z" fill="#000"/>
<!-- point triangle pick -->
<path d="M516,182.5 L511,191.5 L520,191.5Z" fill="none" stroke="#c0c8d0" stroke-width="0.5"/>
<circle cx="516" cy="182.5" r="1.3" fill="#a80808"/><circle cx="511" cy="191.5" r="1.3" fill="#a80808"/>
<path d="M519.5,191 L520.5,196 L521.7,194.8 L524,197 L524.8,196.2 L522.5,194 L524,193.2Z" fill="#000"/>
<!-- ?s -->
<circle cx="538.5" cy="192.5" r="2.5" fill="#e00000"/>
<text x="541.5" y="192" font-family="Liberation Sans" font-size="13" fill="#111">?</text>
<path d="M560,194.5 L565,187 L570,194.5Z" fill="#90d880" stroke="#208010" stroke-width="1"/>
<text x="567.5" y="192" font-family="Liberation Sans" font-size="13" fill="#111">?</text>
<!-- gray plus minus x -->
<path d="M592,181 H596 V186 H601 V190 H596 V195 H592 V190 H587 V186 H592Z" fill="#a6a6a6"/>
<rect x="613" y="186" width="14" height="4" fill="#a6a6a6"/>
<circle cx="645.5" cy="188" r="6.6" fill="none" stroke="#8c8c8c" stroke-width="2.4"/>
<circle cx="645.5" cy="188" r="4.8" fill="#f8f8f8" stroke="#b8b8b8" stroke-width="0.6"/>
<path d="M643.2,185.7 L647.8,190.3 M647.8,185.7 L643.2,190.3" stroke="#8a8a8a" stroke-width="2"/>
</svg>


<!-- viewport -->
<div class="a" style="left:11px;top:202px;width:1306px;height:636px;background:#0000f0"></div>
<div class="a" style="left:13px;top:204px;width:1304px;height:634px;background:#e8eef0"></div>
<div class="a" style="left:14px;top:205px;width:1303px;height:633px;background:#0c1410"></div>
<div class="a" style="left:15px;top:206px;width:1302px;height:632px;background:#52586e"></div>
<div class="a" style="left:15px;top:206px;width:1302px;height:4px;background:linear-gradient(rgba(10,20,20,0.6),rgba(10,20,20,0))"></div>
<div class="a" style="left:15px;top:206px;width:4px;height:632px;background:linear-gradient(90deg,rgba(10,20,20,0.5),rgba(10,20,20,0))"></div>
<svg class="a" style="left:0;top:0" width="1318" height="839" viewBox="0 0 1318 839">
<defs>
<clipPath id="vp"><rect x="15" y="206" width="1302" height="632"/></clipPath>
<clipPath id="topc"><polygon points="203.6,505.7 1155.8,414.9 1267.5,548.0 281.0,687.0"/></clipPath>
<filter id="bl" x="-5%" y="-5%" width="110%" height="110%"><feGaussianBlur stdDeviation="1.5"/></filter>
<linearGradient id="frontg" gradientUnits="userSpaceOnUse" x1="268" y1="730" x2="335" y2="745"><stop offset="0" stop-color="#53565f"/><stop offset="0.35" stop-color="#485064"/><stop offset="1" stop-color="#3a455f"/></linearGradient>
<linearGradient id="leftg" gradientUnits="userSpaceOnUse" x1="190" y1="560" x2="280" y2="700"><stop offset="0" stop-color="#656565"/><stop offset="1" stop-color="#5f5f5f"/></linearGradient>
<linearGradient id="s0" gradientUnits="userSpaceOnUse" x1="207.0" y1="505.4" x2="229.2" y2="693.0"><stop offset="0.00" stop-color="#b8beca"/><stop offset="0.02" stop-color="#d2c2b1"/><stop offset="0.04" stop-color="#d2c2b1"/><stop offset="0.06" stop-color="#d2c2b1"/><stop offset="0.08" stop-color="#d2c2b1"/><stop offset="0.10" stop-color="#d2c2b1"/><stop offset="0.12" stop-color="#d2c2b1"/><stop offset="0.14" stop-color="#d2c2b1"/><stop offset="0.16" stop-color="#d2c2b1"/><stop offset="0.19" stop-color="#d2c2b1"/><stop offset="0.22" stop-color="#d2c2b1"/><stop offset="0.30" stop-color="#d2c3b2"/><stop offset="0.40" stop-color="#d1c4b3"/><stop offset="0.50" stop-color="#d1c5b4"/><stop offset="0.60" stop-color="#d1c4b4"/><stop offset="0.70" stop-color="#d2c3b2"/><stop offset="0.76" stop-color="#d2c2b1"/><stop offset="0.80" stop-color="#d3c2b0"/><stop offset="0.83" stop-color="#d3c2b0"/><stop offset="0.86" stop-color="#d3c2b0"/><stop offset="0.88" stop-color="#d3c2b0"/><stop offset="0.90" stop-color="#d3c2b0"/><stop offset="0.92" stop-color="#d3c2b0"/><stop offset="0.95" stop-color="#d3c2b0"/><stop offset="0.98" stop-color="#d3c2b0"/><stop offset="1.00" stop-color="#b8beca"/></linearGradient><linearGradient id="s1" gradientUnits="userSpaceOnUse" x1="213.8" y1="504.7" x2="235.9" y2="692.1"><stop offset="0.00" stop-color="#b7bdcb"/><stop offset="0.02" stop-color="#d2c1b1"/><stop offset="0.04" stop-color="#d2c1b0"/><stop offset="0.06" stop-color="#d2c1b0"/><stop offset="0.08" stop-color="#d2c1b0"/><stop offset="0.10" stop-color="#d2c1b0"/><stop offset="0.12" stop-color="#d2c1b0"/><stop offset="0.14" stop-color="#d2c1b0"/><stop offset="0.16" stop-color="#d2c1b0"/><stop offset="0.19" stop-color="#d2c1b0"/><stop offset="0.22" stop-color="#d2c1b1"/><stop offset="0.30" stop-color="#d2c2b2"/><stop offset="0.40" stop-color="#d1c3b3"/><stop offset="0.50" stop-color="#d1c4b4"/><stop offset="0.60" stop-color="#d1c4b3"/><stop offset="0.70" stop-color="#d2c3b2"/><stop offset="0.76" stop-color="#d2c2b1"/><stop offset="0.80" stop-color="#d3c1b0"/><stop offset="0.83" stop-color="#d3c1b0"/><stop offset="0.86" stop-color="#d3c1b0"/><stop offset="0.88" stop-color="#d3c1b0"/><stop offset="0.90" stop-color="#d3c1b0"/><stop offset="0.92" stop-color="#d3c1b0"/><stop offset="0.95" stop-color="#d3c1b0"/><stop offset="0.98" stop-color="#d3c1b0"/><stop offset="1.00" stop-color="#b7bdcb"/></linearGradient><linearGradient id="s2" gradientUnits="userSpaceOnUse" x1="220.6" y1="504.1" x2="242.7" y2="691.1"><stop offset="0.00" stop-color="#b4bdcd"/><stop offset="0.02" stop-color="#cec1b5"/><stop offset="0.04" stop-color="#d3c1b0"/><stop offset="0.06" stop-color="#d3c1b0"/><stop offset="0.08" stop-color="#d3c1b0"/><stop offset="0.10" stop-color="#d3c1b0"/><stop offset="0.12" stop-color="#d3c1b0"/><stop offset="0.14" stop-color="#d3c1b0"/><stop offset="0.16" stop-color="#d3c1b0"/><stop offset="0.19" stop-color="#d3c1b0"/><stop offset="0.22" stop-color="#d3c1b0"/><stop offset="0.30" stop-color="#d2c2b1"/><stop offset="0.40" stop-color="#d2c3b3"/><stop offset="0.50" stop-color="#d1c4b4"/><stop offset="0.60" stop-color="#d1c4b3"/><stop offset="0.70" stop-color="#d2c2b1"/><stop offset="0.76" stop-color="#d3c1b0"/><stop offset="0.80" stop-color="#d3c1af"/><stop offset="0.83" stop-color="#d3c1af"/><stop offset="0.86" stop-color="#d3c1af"/><stop offset="0.88" stop-color="#d3c1af"/><stop offset="0.90" stop-color="#d3c1af"/><stop offset="0.92" stop-color="#d3c1af"/><stop offset="0.95" stop-color="#d3c1af"/><stop offset="0.98" stop-color="#d3c1af"/><stop offset="1.00" stop-color="#b4bdcd"/></linearGradient><linearGradient id="s3" gradientUnits="userSpaceOnUse" x1="227.4" y1="503.4" x2="249.5" y2="690.2"><stop offset="0.00" stop-color="#b2bbcf"/><stop offset="0.02" stop-color="#c6c0bd"/><stop offset="0.04" stop-color="#d3c0af"/><stop offset="0.06" stop-color="#d3c0af"/><stop offset="0.08" stop-color="#d3c0af"/><stop offset="0.10" stop-color="#d3c0af"/><stop offset="0.12" stop-color="#d3c0af"/><stop offset="0.14" stop-color="#d3c0af"/><stop offset="0.16" stop-color="#d3c0af"/><stop offset="0.19" stop-color="#d3c0af"/><stop offset="0.22" stop-color="#d3c0af"/><stop offset="0.30" stop-color="#d2c1b0"/><stop offset="0.40" stop-color="#d2c3b2"/><stop offset="0.50" stop-color="#d1c4b3"/><stop offset="0.60" stop-color="#d2c3b2"/><stop offset="0.70" stop-color="#d2c2b1"/><stop offset="0.76" stop-color="#d3c1af"/><stop offset="0.80" stop-color="#d4c0ae"/><stop offset="0.83" stop-color="#d4c0ae"/><stop offset="0.86" stop-color="#d4c0ae"/><stop offset="0.88" stop-color="#d4c0ae"/><stop offset="0.90" stop-color="#d4c0ae"/><stop offset="0.92" stop-color="#d4c0ae"/><stop offset="0.95" stop-color="#d4c0ae"/><stop offset="0.98" stop-color="#d4c0ae"/><stop offset="1.00" stop-color="#b2bbcf"/></linearGradient><linearGradient id="s4" gradientUnits="userSpaceOnUse" x1="234.2" y1="502.8" x2="256.2" y2="689.2"><stop offset="0.00" stop-color="#aebad2"/><stop offset="0.02" stop-color="#bdbec5"/><stop offset="0.04" stop-color="#d1bfb1"/><stop offset="0.06" stop-color="#d4bfae"/><stop offset="0.08" stop-color="#d4bfae"/><stop offset="0.10" stop-color="#d4bfae"/><stop offset="0.12" stop-color="#d4bfae"/><stop offset="0.14" stop-color="#d4bfae"/><stop offset="0.16" stop-color="#d4bfae"/><stop offset="0.19" stop-color="#d4bfae"/><stop offset="0.22" stop-color="#d3c0ae"/><stop offset="0.30" stop-color="#d3c1af"/><stop offset="0.40" stop-color="#d2c2b1"/><stop offset="0.50" stop-color="#d2c3b3"/><stop offset="0.60" stop-color="#d2c3b2"/><stop offset="0.70" stop-color="#d3c1b0"/><stop offset="0.76" stop-color="#d4c0ae"/><stop offset="0.80" stop-color="#d4bfad"/><stop offset="0.83" stop-color="#d4bfad"/><stop offset="0.86" stop-color="#d4bfad"/><stop offset="0.88" stop-color="#d4bfad"/><stop offset="0.90" stop-color="#d4bfad"/><stop offset="0.92" stop-color="#d4bfad"/><stop offset="0.95" stop-color="#d4bfad"/><stop offset="0.98" stop-color="#d1bfb1"/><stop offset="1.00" stop-color="#aebad2"/></linearGradient><linearGradient id="s5" gradientUnits="userSpaceOnUse" x1="241.0" y1="502.1" x2="263.0" y2="688.2"><stop offset="0.00" stop-color="#aab9d5"/><stop offset="0.02" stop-color="#b6bccc"/><stop offset="0.04" stop-color="#cabfb8"/><stop offset="0.06" stop-color="#d4bead"/><stop offset="0.08" stop-color="#d4bead"/><stop offset="0.10" stop-color="#d4bead"/><stop offset="0.12" stop-color="#d4bead"/><stop offset="0.14" stop-color="#d4bead"/><stop offset="0.16" stop-color="#d4bead"/><stop offset="0.19" stop-color="#d4bead"/><stop offset="0.22" stop-color="#d4bfad"/><stop offset="0.30" stop-color="#d3c0af"/><stop offset="0.40" stop-color="#d2c2b0"/><stop offset="0.50" stop-color="#d2c3b2"/><stop offset="0.60" stop-color="#d2c2b1"/><stop offset="0.70" stop-color="#d3c0af"/><stop offset="0.76" stop-color="#d4bfad"/><stop offset="0.80" stop-color="#d5beac"/><stop offset="0.83" stop-color="#d5beac"/><stop offset="0.86" stop-color="#d5beac"/><stop offset="0.88" stop-color="#d5beac"/><stop offset="0.90" stop-color="#d5beac"/><stop offset="0.92" stop-color="#d5beac"/><stop offset="0.95" stop-color="#d5beac"/><stop offset="0.98" stop-color="#cabfb8"/><stop offset="1.00" stop-color="#aab9d5"/></linearGradient><linearGradient id="s6" gradientUnits="userSpaceOnUse" x1="247.8" y1="501.5" x2="269.7" y2="687.3"><stop offset="0.00" stop-color="#a7b7d8"/><stop offset="0.02" stop-color="#b0bad1"/><stop offset="0.04" stop-color="#c2bdc0"/><stop offset="0.06" stop-color="#d0beb1"/><stop offset="0.08" stop-color="#d5beab"/><stop offset="0.10" stop-color="#d5beab"/><stop offset="0.12" stop-color="#d5beab"/><stop offset="0.14" stop-color="#d5beab"/><stop offset="0.16" stop-color="#d5beab"/><stop offset="0.19" stop-color="#d5beab"/><stop offset="0.22" stop-color="#d4beac"/><stop offset="0.30" stop-color="#d4bfae"/><stop offset="0.40" stop-color="#d3c1b0"/><stop offset="0.50" stop-color="#d2c3b1"/><stop offset="0.60" stop-color="#d3c2b0"/><stop offset="0.70" stop-color="#d4c0ae"/><stop offset="0.76" stop-color="#d5beac"/><stop offset="0.80" stop-color="#d5beab"/><stop offset="0.83" stop-color="#d5beab"/><stop offset="0.86" stop-color="#d5beab"/><stop offset="0.88" stop-color="#d5beab"/><stop offset="0.90" stop-color="#d5beab"/><stop offset="0.92" stop-color="#d5beab"/><stop offset="0.95" stop-color="#d5beab"/><stop offset="0.98" stop-color="#c1bdc1"/><stop offset="1.00" stop-color="#a7b7d8"/></linearGradient><linearGradient id="s7" gradientUnits="userSpaceOnUse" x1="254.6" y1="500.8" x2="276.5" y2="686.3"><stop offset="0.00" stop-color="#a3b6da"/><stop offset="0.02" stop-color="#aab9d5"/><stop offset="0.04" stop-color="#b9bcc7"/><stop offset="0.06" stop-color="#cabdb7"/><stop offset="0.08" stop-color="#d3bdad"/><stop offset="0.10" stop-color="#d5bdaa"/><stop offset="0.12" stop-color="#d5bdaa"/><stop offset="0.14" stop-color="#d5bdaa"/><stop offset="0.16" stop-color="#d5bdaa"/><stop offset="0.19" stop-color="#d5bdaa"/><stop offset="0.22" stop-color="#d5bdab"/><stop offset="0.30" stop-color="#d4bfad"/><stop offset="0.40" stop-color="#d3c0af"/><stop offset="0.50" stop-color="#d3c2b1"/><stop offset="0.60" stop-color="#d3c1b0"/><stop offset="0.70" stop-color="#d4bfad"/><stop offset="0.76" stop-color="#d5beab"/><stop offset="0.80" stop-color="#d6bda9"/><stop offset="0.83" stop-color="#d6bda9"/><stop offset="0.86" stop-color="#d6bda9"/><stop offset="0.88" stop-color="#d6bda9"/><stop offset="0.90" stop-color="#d6bda9"/><stop offset="0.92" stop-color="#d6bda9"/><stop offset="0.95" stop-color="#d6bda9"/><stop offset="0.98" stop-color="#b8bbc9"/><stop offset="1.00" stop-color="#a3b6da"/></linearGradient><linearGradient id="s8" gradientUnits="userSpaceOnUse" x1="261.4" y1="500.2" x2="283.3" y2="685.4"><stop offset="0.00" stop-color="#a0b5dd"/><stop offset="0.02" stop-color="#a6b7d8"/><stop offset="0.04" stop-color="#b2bace"/><stop offset="0.06" stop-color="#c2bcbf"/><stop offset="0.08" stop-color="#cebcb2"/><stop offset="0.10" stop-color="#d5bcaa"/><stop offset="0.12" stop-color="#d5bca9"/><stop offset="0.14" stop-color="#d5bca9"/><stop offset="0.16" stop-color="#d5bca9"/><stop offset="0.19" stop-color="#d5bca9"/><stop offset="0.22" stop-color="#d5bcaa"/><stop offset="0.30" stop-color="#d4beac"/><stop offset="0.40" stop-color="#d3c0ae"/><stop offset="0.50" stop-color="#d3c2b0"/><stop offset="0.60" stop-color="#d3c1af"/><stop offset="0.70" stop-color="#d4bfac"/><stop offset="0.76" stop-color="#d6bdaa"/><stop offset="0.80" stop-color="#d6bca8"/><stop offset="0.83" stop-color="#d6bca8"/><stop offset="0.86" stop-color="#d6bca8"/><stop offset="0.88" stop-color="#d6bca8"/><stop offset="0.90" stop-color="#d6bca8"/><stop offset="0.92" stop-color="#d6bca8"/><stop offset="0.95" stop-color="#d4bcab"/><stop offset="0.98" stop-color="#b1bacf"/><stop offset="1.00" stop-color="#a0b5dd"/></linearGradient><linearGradient id="s9" gradientUnits="userSpaceOnUse" x1="268.2" y1="499.5" x2="290.0" y2="684.4"><stop offset="0.00" stop-color="#9eb4df"/><stop offset="0.02" stop-color="#a4b6da"/><stop offset="0.04" stop-color="#adb8d2"/><stop offset="0.06" stop-color="#bbbbc5"/><stop offset="0.08" stop-color="#c8bcb8"/><stop offset="0.10" stop-color="#d1bcae"/><stop offset="0.12" stop-color="#d5bba9"/><stop offset="0.14" stop-color="#d6bba9"/><stop offset="0.16" stop-color="#d6bba9"/><stop offset="0.19" stop-color="#d6bba9"/><stop offset="0.22" stop-color="#d6bca9"/><stop offset="0.30" stop-color="#d5beab"/><stop offset="0.40" stop-color="#d4c0ae"/><stop offset="0.50" stop-color="#d3c2b0"/><stop offset="0.60" stop-color="#d3c1af"/><stop offset="0.70" stop-color="#d5beac"/><stop offset="0.76" stop-color="#d6bda9"/><stop offset="0.80" stop-color="#d7bba8"/><stop offset="0.83" stop-color="#d7bba8"/><stop offset="0.86" stop-color="#d7bba8"/><stop offset="0.88" stop-color="#d7bba8"/><stop offset="0.90" stop-color="#d7bba8"/><stop offset="0.92" stop-color="#d7bba8"/><stop offset="0.95" stop-color="#d0bcb0"/><stop offset="0.98" stop-color="#abb8d4"/><stop offset="1.00" stop-color="#9eb4df"/></linearGradient><linearGradient id="s10" gradientUnits="userSpaceOnUse" x1="275.0" y1="498.9" x2="296.8" y2="683.4"><stop offset="0.00" stop-color="#9cb3e0"/><stop offset="0.02" stop-color="#a2b5dc"/><stop offset="0.04" stop-color="#a9b7d6"/><stop offset="0.06" stop-color="#b5bacb"/><stop offset="0.08" stop-color="#c2bbbe"/><stop offset="0.10" stop-color="#cdbcb3"/><stop offset="0.12" stop-color="#d3bbab"/><stop offset="0.14" stop-color="#d6bba8"/><stop offset="0.16" stop-color="#d6bba8"/><stop offset="0.19" stop-color="#d6bba8"/><stop offset="0.22" stop-color="#d6bca9"/><stop offset="0.30" stop-color="#d5bdab"/><stop offset="0.40" stop-color="#d4bfad"/><stop offset="0.50" stop-color="#d3c2b0"/><stop offset="0.60" stop-color="#d4c0ae"/><stop offset="0.70" stop-color="#d5beab"/><stop offset="0.76" stop-color="#d6bca9"/><stop offset="0.80" stop-color="#d7bba7"/><stop offset="0.83" stop-color="#d7bba7"/><stop offset="0.86" stop-color="#d7bba7"/><stop offset="0.88" stop-color="#d7bba7"/><stop offset="0.90" stop-color="#d7bba7"/><stop offset="0.92" stop-color="#d7bba7"/><stop offset="0.95" stop-color="#cabcb6"/><stop offset="0.98" stop-color="#a8b7d7"/><stop offset="1.00" stop-color="#9cb3e0"/></linearGradient><linearGradient id="s11" gradientUnits="userSpaceOnUse" x1="281.8" y1="498.2" x2="303.6" y2="682.5"><stop offset="0.00" stop-color="#9cb3e0"/><stop offset="0.02" stop-color="#a1b5dd"/><stop offset="0.04" stop-color="#a7b7d8"/><stop offset="0.06" stop-color="#b1b9ce"/><stop offset="0.08" stop-color="#bdbbc3"/><stop offset="0.10" stop-color="#c8bbb8"/><stop offset="0.12" stop-color="#d0bbaf"/><stop offset="0.14" stop-color="#d4bbaa"/><stop offset="0.16" stop-color="#d6bba8"/><stop offset="0.19" stop-color="#d6bba8"/><stop offset="0.22" stop-color="#d6bba9"/><stop offset="0.30" stop-color="#d5bdab"/><stop offset="0.40" stop-color="#d4bfad"/><stop offset="0.50" stop-color="#d3c2b0"/><stop offset="0.60" stop-color="#d4c0ae"/><stop offset="0.70" stop-color="#d5beab"/><stop offset="0.76" stop-color="#d6bca9"/><stop offset="0.80" stop-color="#d7bba7"/><stop offset="0.83" stop-color="#d7bba7"/><stop offset="0.86" stop-color="#d7bba7"/><stop offset="0.88" stop-color="#d7bba7"/><stop offset="0.90" stop-color="#d7bba7"/><stop offset="0.92" stop-color="#d6bba8"/><stop offset="0.95" stop-color="#c4bbbc"/><stop offset="0.98" stop-color="#a6b6d9"/><stop offset="1.00" stop-color="#9cb3e0"/></linearGradient><linearGradient id="s12" gradientUnits="userSpaceOnUse" x1="288.6" y1="497.6" x2="310.3" y2="681.5"><stop offset="0.00" stop-color="#9cb3e0"/><stop offset="0.02" stop-color="#a0b5dd"/><stop offset="0.04" stop-color="#a6b6d9"/><stop offset="0.06" stop-color="#aeb8d1"/><stop offset="0.08" stop-color="#b9bac7"/><stop offset="0.10" stop-color="#c4bbbc"/><stop offset="0.12" stop-color="#ccbcb3"/><stop offset="0.14" stop-color="#d2bbad"/><stop offset="0.16" stop-color="#d5bba9"/><stop offset="0.19" stop-color="#d6bba8"/><stop offset="0.22" stop-color="#d6bba9"/><stop offset="0.30" stop-color="#d5bdab"/><stop offset="0.40" stop-color="#d4bfad"/><stop offset="0.50" stop-color="#d3c2b0"/><stop offset="0.60" stop-color="#d4c0ae"/><stop offset="0.70" stop-color="#d5beab"/><stop offset="0.76" stop-color="#d6bca9"/><stop offset="0.80" stop-color="#d7bba7"/><stop offset="0.83" stop-color="#d7bba7"/><stop offset="0.86" stop-color="#d7bba7"/><stop offset="0.88" stop-color="#d7bba7"/><stop offset="0.90" stop-color="#d7bba7"/><stop offset="0.92" stop-color="#d4bbaa"/><stop offset="0.95" stop-color="#bfbbc1"/><stop offset="0.98" stop-color="#a4b6da"/><stop offset="1.00" stop-color="#9cb3e0"/></linearGradient><linearGradient id="s13" gradientUnits="userSpaceOnUse" x1="295.4" y1="496.9" x2="317.1" y2="680.6"><stop offset="0.00" stop-color="#9cb3e0"/><stop offset="0.02" stop-color="#a0b5dd"/><stop offset="0.04" stop-color="#a5b6da"/><stop offset="0.06" stop-color="#acb8d3"/><stop offset="0.08" stop-color="#b6baca"/><stop offset="0.10" stop-color="#c0bbc0"/><stop offset="0.12" stop-color="#c9bcb7"/><stop offset="0.14" stop-color="#cfbbb0"/><stop offset="0.16" stop-color="#d4bbab"/><stop offset="0.19" stop-color="#d6bba8"/><stop offset="0.22" stop-color="#d6bba9"/><stop offset="0.30" stop-color="#d5bdab"/><stop offset="0.40" stop-color="#d4bfad"/><stop offset="0.50" stop-color="#d3c2b0"/><stop offset="0.60" stop-color="#d4c0ae"/><stop offset="0.70" stop-color="#d5beab"/><stop offset="0.76" stop-color="#d6bca9"/><stop offset="0.80" stop-color="#d7bba7"/><stop offset="0.83" stop-color="#d7bba7"/><stop offset="0.86" stop-color="#d7bba7"/><stop offset="0.88" stop-color="#d7bba7"/><stop offset="0.90" stop-color="#d7bba7"/><stop offset="0.92" stop-color="#d1bbae"/><stop offset="0.95" stop-color="#bbbac5"/><stop offset="0.98" stop-color="#a3b6db"/><stop offset="1.00" stop-color="#9cb3e0"/></linearGradient><linearGradient id="s14" gradientUnits="userSpaceOnUse" x1="302.2" y1="496.3" x2="323.9" y2="679.6"><stop offset="0.00" stop-color="#9cb3e0"/><stop offset="0.02" stop-color="#a0b4dd"/><stop offset="0.04" stop-color="#a4b6da"/><stop offset="0.06" stop-color="#abb8d4"/><stop offset="0.08" stop-color="#b4b9cc"/><stop offset="0.10" stop-color="#bdbbc3"/><stop offset="0.12" stop-color="#c6bbba"/><stop offset="0.14" stop-color="#cdbcb2"/><stop offset="0.16" stop-color="#d2bbad"/><stop offset="0.19" stop-color="#d6bba8"/><stop offset="0.22" stop-color="#d6bba9"/><stop offset="0.30" stop-color="#d5bdab"/><stop offset="0.40" stop-color="#d4bfad"/><stop offset="0.50" stop-color="#d3c2b0"/><stop offset="0.60" stop-color="#d4c0ae"/><stop offset="0.70" stop-color="#d5beab"/><stop offset="0.76" stop-color="#d6bca9"/><stop offset="0.80" stop-color="#d7bba7"/><stop offset="0.83" stop-color="#d7bba7"/><stop offset="0.86" stop-color="#d7bba7"/><stop offset="0.88" stop-color="#d7bba7"/><stop offset="0.90" stop-color="#d6bba8"/><stop offset="0.92" stop-color="#cfbcb1"/><stop offset="0.95" stop-color="#b8bac8"/><stop offset="0.98" stop-color="#a3b6db"/><stop offset="1.00" stop-color="#9cb3e0"/></linearGradient><linearGradient id="s15" gradientUnits="userSpaceOnUse" x1="309.0" y1="495.6" x2="330.6" y2="678.6"><stop offset="0.00" stop-color="#9cb3e0"/><stop offset="0.02" stop-color="#a0b4dd"/><stop offset="0.04" stop-color="#a3b6db"/><stop offset="0.06" stop-color="#aab7d5"/><stop offset="0.08" stop-color="#b2b9ce"/><stop offset="0.10" stop-color="#bbbac5"/><stop offset="0.12" stop-color="#c4bbbc"/><stop offset="0.14" stop-color="#cbbcb4"/><stop offset="0.16" stop-color="#d0bbaf"/><stop offset="0.19" stop-color="#d5bba9"/><stop offset="0.22" stop-color="#d6bba9"/><stop offset="0.30" stop-color="#d5bdab"/><stop offset="0.40" stop-color="#d4bfad"/><stop offset="0.50" stop-color="#d3c2b0"/><stop offset="0.60" stop-color="#d4c0ae"/><stop offset="0.70" stop-color="#d5beab"/><stop offset="0.76" stop-color="#d6bca9"/><stop offset="0.80" stop-color="#d7bba7"/><stop offset="0.83" stop-color="#d7bba7"/><stop offset="0.86" stop-color="#d7bba7"/><stop offset="0.88" stop-color="#d7bba7"/><stop offset="0.90" stop-color="#d4bbaa"/><stop offset="0.92" stop-color="#ccbcb3"/><stop offset="0.95" stop-color="#b6baca"/><stop offset="0.98" stop-color="#a2b5db"/><stop offset="1.00" stop-color="#9cb3e0"/></linearGradient><linearGradient id="s16" gradientUnits="userSpaceOnUse" x1="315.8" y1="495.0" x2="337.4" y2="677.7"><stop offset="0.00" stop-color="#9cb3e0"/><stop offset="0.02" stop-color="#a0b4dd"/><stop offset="0.04" stop-color="#a3b6db"/><stop offset="0.06" stop-color="#a9b7d6"/><stop offset="0.08" stop-color="#b1b9cf"/><stop offset="0.10" stop-color="#babac6"/><stop offset="0.12" stop-color="#c2bbbe"/><stop offset="0.14" stop-color="#cabcb6"/><stop offset="0.16" stop-color="#cfbbb0"/><stop offset="0.19" stop-color="#d5bbaa"/><stop offset="0.22" stop-color="#d6bba9"/><stop offset="0.30" stop-color="#d5bdab"/><stop offset="0.40" stop-color="#d4bfad"/><stop offset="0.50" stop-color="#d3c2b0"/><stop offset="0.60" stop-color="#d4c0ae"/><stop offset="0.70" stop-color="#d5beab"/><stop offset="0.76" stop-color="#d6bca9"/><stop offset="0.80" stop-color="#d7bba7"/><stop offset="0.83" stop-color="#d7bba7"/><stop offset="0.86" stop-color="#d7bba7"/><stop offset="0.88" stop-color="#d7bba7"/><stop offset="0.90" stop-color="#d3bbab"/><stop offset="0.92" stop-color="#cabcb5"/><stop offset="0.95" stop-color="#b4b9cb"/><stop offset="0.98" stop-color="#a2b5db"/><stop offset="1.00" stop-color="#9cb3e0"/></linearGradient><linearGradient id="s17" gradientUnits="userSpaceOnUse" x1="322.6" y1="494.4" x2="344.2" y2="676.7"><stop offset="0.00" stop-color="#9cb3e0"/><stop offset="0.02" stop-color="#9fb4dd"/><stop offset="0.04" stop-color="#a3b6db"/><stop offset="0.06" stop-color="#a9b7d6"/><stop offset="0.08" stop-color="#b0b9cf"/><stop offset="0.10" stop-color="#b9bac7"/><stop offset="0.12" stop-color="#c1bbbf"/><stop offset="0.14" stop-color="#c9bcb7"/><stop offset="0.16" stop-color="#cfbbb1"/><stop offset="0.19" stop-color="#d4bbaa"/><stop offset="0.22" stop-color="#d6bba9"/><stop offset="0.30" stop-color="#d5bdab"/><stop offset="0.40" stop-color="#d4bfad"/><stop offset="0.50" stop-color="#d3c2b0"/><stop offset="0.60" stop-color="#d4c0ae"/><stop offset="0.70" stop-color="#d5beab"/><stop offset="0.76" stop-color="#d6bca9"/><stop offset="0.80" stop-color="#d7bba7"/><stop offset="0.83" stop-color="#d7bba7"/><stop offset="0.86" stop-color="#d7bba7"/><stop offset="0.88" stop-color="#d7bba7"/><stop offset="0.90" stop-color="#d2bbac"/><stop offset="0.92" stop-color="#c9bcb7"/><stop offset="0.95" stop-color="#b3b9cc"/><stop offset="0.98" stop-color="#a2b5dc"/><stop offset="1.00" stop-color="#9cb3e0"/></linearGradient><linearGradient id="s18" gradientUnits="userSpaceOnUse" x1="329.4" y1="493.7" x2="350.9" y2="675.8"><stop offset="0.00" stop-color="#9cb3e0"/><stop offset="0.02" stop-color="#9fb4dd"/><stop offset="0.04" stop-color="#a3b6db"/><stop offset="0.06" stop-color="#a9b7d6"/><stop offset="0.08" stop-color="#b0b9cf"/><stop offset="0.10" stop-color="#b9bac7"/><stop offset="0.12" stop-color="#c1bbbf"/><stop offset="0.14" stop-color="#c9bcb7"/><stop offset="0.16" stop-color="#cfbbb1"/><stop offset="0.19" stop-color="#d4bbaa"/><stop offset="0.22" stop-color="#d6bba9"/><stop offset="0.30" stop-color="#d5bdab"/><stop offset="0.40" stop-color="#d4bfad"/><stop offset="0.50" stop-color="#d3c2b0"/><stop offset="0.60" stop-color="#d4c0ae"/><stop offset="0.70" stop-color="#d5beab"/><stop offset="0.76" stop-color="#d6bca9"/><stop offset="0.80" stop-color="#d7bba7"/><stop offset="0.83" stop-color="#d7bba7"/><stop offset="0.86" stop-color="#d7bba7"/><stop offset="0.88" stop-color="#d7bba7"/><stop offset="0.90" stop-color="#d2bbad"/><stop offset="0.92" stop-color="#c9bbb7"/><stop offset="0.95" stop-color="#b3b9cd"/><stop offset="0.98" stop-color="#a2b5dc"/><stop offset="1.00" stop-color="#9cb3e0"/></linearGradient><linearGradient id="s19" gradientUnits="userSpaceOnUse" x1="336.2" y1="493.1" x2="357.7" y2="674.8"><stop offset="0.00" stop-color="#9cb3e0"/><stop offset="0.02" stop-color="#9fb4dd"/><stop offset="0.04" stop-color="#a3b6db"/><stop offset="0.06" stop-color="#a9b7d6"/><stop offset="0.08" stop-color="#b0b9cf"/><stop offset="0.10" stop-color="#b9bac7"/><stop offset="0.12" stop-color="#c1bbbf"/><stop offset="0.14" stop-color="#c9bcb7"/><stop offset="0.16" stop-color="#cfbbb1"/><stop offset="0.19" stop-color="#d4bbaa"/><stop offset="0.22" stop-color="#d6bba9"/><stop offset="0.30" stop-color="#d5bdab"/><stop offset="0.40" stop-color="#d4bfad"/><stop offset="0.50" stop-color="#d3c2b0"/><stop offset="0.60" stop-color="#d4c0ae"/><stop offset="0.70" stop-color="#d5beab"/><stop offset="0.76" stop-color="#d6bca9"/><stop offset="0.80" stop-color="#d7bba7"/><stop offset="0.83" stop-color="#d7bba7"/><stop offset="0.86" stop-color="#d7bba7"/><stop offset="0.88" stop-color="#d7bba7"/><stop offset="0.90" stop-color="#d2bbad"/><stop offset="0.92" stop-color="#c8bbb8"/><stop offset="0.95" stop-color="#b3b9cd"/><stop offset="0.98" stop-color="#a2b5dc"/><stop offset="1.00" stop-color="#9cb3e0"/></linearGradient><linearGradient id="s20" gradientUnits="userSpaceOnUse" x1="343.0" y1="492.4" x2="364.5" y2="673.8"><stop offset="0.00" stop-color="#9cb3e0"/><stop offset="0.02" stop-color="#a0b4dd"/><stop offset="0.04" stop-color="#a3b6db"/><stop offset="0.06" stop-color="#a9b7d6"/><stop offset="0.08" stop-color="#b0b9cf"/><stop offset="0.10" stop-color="#b9bac7"/><stop offset="0.12" stop-color="#c2bbbe"/><stop offset="0.14" stop-color="#c9bcb7"/><stop offset="0.16" stop-color="#cfbbb0"/><stop offset="0.19" stop-color="#d4bbaa"/><stop offset="0.22" stop-color="#d6bba9"/><stop offset="0.30" stop-color="#d5bdab"/><stop offset="0.40" stop-color="#d4bfad"/><stop offset="0.50" stop-color="#d3c2b0"/><stop offset="0.60" stop-color="#d4c0ae"/><stop offset="0.70" stop-color="#d5beab"/><stop offset="0.76" stop-color="#d6bca9"/><stop offset="0.80" stop-color="#d7bba7"/><stop offset="0.83" stop-color="#d7bba7"/><stop offset="0.86" stop-color="#d7bba7"/><stop offset="0.88" stop-color="#d6bba8"/><stop offset="0.90" stop-color="#d1bbae"/><stop offset="0.92" stop-color="#c8bbb8"/><stop offset="0.95" stop-color="#b2b9cd"/><stop offset="0.98" stop-color="#a2b5dc"/><stop offset="1.00" stop-color="#9cb3e0"/></linearGradient><linearGradient id="s21" gradientUnits="userSpaceOnUse" x1="356.8" y1="491.1" x2="378.2" y2="671.9"><stop offset="0.00" stop-color="#9cb3e0"/><stop offset="0.02" stop-color="#a0b4dd"/><stop offset="0.04" stop-color="#a3b6db"/><stop offset="0.06" stop-color="#a9b7d6"/><stop offset="0.08" stop-color="#b1b9cf"/><stop offset="0.10" stop-color="#b9bac7"/><stop offset="0.12" stop-color="#c2bbbe"/><stop offset="0.14" stop-color="#c9bcb6"/><stop offset="0.16" stop-color="#cfbbb0"/><stop offset="0.19" stop-color="#d4bbaa"/><stop offset="0.22" stop-color="#d6bba9"/><stop offset="0.30" stop-color="#d5bdab"/><stop offset="0.40" stop-color="#d4bfad"/><stop offset="0.50" stop-color="#d3c2b0"/><stop offset="0.60" stop-color="#d4c0ae"/><stop offset="0.70" stop-color="#d5beab"/><stop offset="0.76" stop-color="#d6bca9"/><stop offset="0.80" stop-color="#d7bba7"/><stop offset="0.83" stop-color="#d7bba7"/><stop offset="0.86" stop-color="#d7bba7"/><stop offset="0.88" stop-color="#d6bba8"/><stop offset="0.90" stop-color="#d1bbae"/><stop offset="0.92" stop-color="#c7bbb9"/><stop offset="0.95" stop-color="#b2b9ce"/><stop offset="0.98" stop-color="#a2b5dc"/><stop offset="1.00" stop-color="#9cb3e0"/></linearGradient><linearGradient id="s22" gradientUnits="userSpaceOnUse" x1="377.6" y1="489.1" x2="398.8" y2="669.0"><stop offset="0.00" stop-color="#9cb3e0"/><stop offset="0.02" stop-color="#a0b4dd"/><stop offset="0.04" stop-color="#a3b6db"/><stop offset="0.06" stop-color="#a9b7d6"/><stop offset="0.08" stop-color="#b1b9cf"/><stop offset="0.10" stop-color="#babac6"/><stop offset="0.12" stop-color="#c2bbbe"/><stop offset="0.14" stop-color="#cabcb6"/><stop offset="0.16" stop-color="#cfbbb0"/><stop offset="0.19" stop-color="#d5bbaa"/><stop offset="0.22" stop-color="#d6bba9"/><stop offset="0.30" stop-color="#d5bdab"/><stop offset="0.40" stop-color="#d4bfad"/><stop offset="0.50" stop-color="#d3c2b0"/><stop offset="0.60" stop-color="#d4c0ae"/><stop offset="0.70" stop-color="#d5beab"/><stop offset="0.76" stop-color="#d6bca9"/><stop offset="0.80" stop-color="#d7bba7"/><stop offset="0.83" stop-color="#d7bba7"/><stop offset="0.86" stop-color="#d7bba7"/><stop offset="0.88" stop-color="#d6bba8"/><stop offset="0.90" stop-color="#d0bbaf"/><stop offset="0.92" stop-color="#c6bbba"/><stop offset="0.95" stop-color="#b1b9ce"/><stop offset="0.98" stop-color="#a2b5dc"/><stop offset="1.00" stop-color="#9cb3e0"/></linearGradient><linearGradient id="s23" gradientUnits="userSpaceOnUse" x1="398.3" y1="487.1" x2="419.4" y2="666.0"><stop offset="0.00" stop-color="#9cb3e0"/><stop offset="0.02" stop-color="#a0b4dd"/><stop offset="0.04" stop-color="#a3b6db"/><stop offset="0.06" stop-color="#a9b7d6"/><stop offset="0.08" stop-color="#b1b9cf"/><stop offset="0.10" stop-color="#babac6"/><stop offset="0.12" stop-color="#c2bbbe"/><stop offset="0.14" stop-color="#cabcb6"/><stop offset="0.16" stop-color="#cfbbb0"/><stop offset="0.19" stop-color="#d5bbaa"/><stop offset="0.22" stop-color="#d6bba9"/><stop offset="0.30" stop-color="#d5bdab"/><stop offset="0.40" stop-color="#d4bfad"/><stop offset="0.50" stop-color="#d3c2b0"/><stop offset="0.60" stop-color="#d4c0ae"/><stop offset="0.70" stop-color="#d5beab"/><stop offset="0.76" stop-color="#d6bca9"/><stop offset="0.80" stop-color="#d7bba7"/><stop offset="0.83" stop-color="#d7bba7"/><stop offset="0.86" stop-color="#d7bba7"/><stop offset="0.88" stop-color="#d5bba9"/><stop offset="0.90" stop-color="#cfbbb0"/><stop offset="0.92" stop-color="#c5bbbb"/><stop offset="0.95" stop-color="#b0b9cf"/><stop offset="0.98" stop-color="#a2b5dc"/><stop offset="1.00" stop-color="#9cb3e0"/></linearGradient><linearGradient id="s24" gradientUnits="userSpaceOnUse" x1="419.1" y1="485.2" x2="440.1" y2="663.1"><stop offset="0.00" stop-color="#9cb3e0"/><stop offset="0.02" stop-color="#a0b4dd"/><stop offset="0.04" stop-color="#a3b6db"/><stop offset="0.06" stop-color="#a9b7d6"/><stop offset="0.08" stop-color="#b1b9ce"/><stop offset="0.10" stop-color="#babac6"/><stop offset="0.12" stop-color="#c3bbbd"/><stop offset="0.14" stop-color="#cabcb5"/><stop offset="0.16" stop-color="#d0bbaf"/><stop offset="0.19" stop-color="#d5bba9"/><stop offset="0.22" stop-color="#d6bba9"/><stop offset="0.30" stop-color="#d5bdab"/><stop offset="0.40" stop-color="#d4bfad"/><stop offset="0.50" stop-color="#d3c2b0"/><stop offset="0.60" stop-color="#d4c0ae"/><stop offset="0.70" stop-color="#d5beab"/><stop offset="0.76" stop-color="#d6bca9"/><stop offset="0.80" stop-color="#d7bba7"/><stop offset="0.83" stop-color="#d7bba7"/><stop offset="0.86" stop-color="#d7bba7"/><stop offset="0.88" stop-color="#d5bbaa"/><stop offset="0.90" stop-color="#cebcb1"/><stop offset="0.92" stop-color="#c4bbbc"/><stop offset="0.95" stop-color="#b0b9d0"/><stop offset="0.98" stop-color="#a1b5dc"/><stop offset="1.00" stop-color="#9cb3e0"/></linearGradient><linearGradient id="s25" gradientUnits="userSpaceOnUse" x1="439.8" y1="483.2" x2="460.7" y2="660.2"><stop offset="0.00" stop-color="#9cb3e0"/><stop offset="0.02" stop-color="#a0b4dd"/><stop offset="0.04" stop-color="#a3b6db"/><stop offset="0.06" stop-color="#a9b7d6"/><stop offset="0.08" stop-color="#b2b9ce"/><stop offset="0.10" stop-color="#babac5"/><stop offset="0.12" stop-color="#c3bbbd"/><stop offset="0.14" stop-color="#cbbcb5"/><stop offset="0.16" stop-color="#d0bbaf"/><stop offset="0.19" stop-color="#d5bba9"/><stop offset="0.22" stop-color="#d6bba9"/><stop offset="0.30" stop-color="#d5bdab"/><stop offset="0.40" stop-color="#d4bfad"/><stop offset="0.50" stop-color="#d3c2b0"/><stop offset="0.60" stop-color="#d4c0ae"/><stop offset="0.70" stop-color="#d5beab"/><stop offset="0.76" stop-color="#d6bca9"/><stop offset="0.80" stop-color="#d7bba7"/><stop offset="0.83" stop-color="#d7bba7"/><stop offset="0.86" stop-color="#d7bba7"/><stop offset="0.88" stop-color="#d4bbaa"/><stop offset="0.90" stop-color="#cebcb2"/><stop offset="0.92" stop-color="#c3bbbd"/><stop offset="0.95" stop-color="#afb8d0"/><stop offset="0.98" stop-color="#a1b5dc"/><stop offset="1.00" stop-color="#9cb3e0"/></linearGradient><linearGradient id="s26" gradientUnits="userSpaceOnUse" x1="460.6" y1="481.2" x2="481.4" y2="657.3"><stop offset="0.00" stop-color="#9cb3e0"/><stop offset="0.02" stop-color="#a0b4dd"/><stop offset="0.04" stop-color="#a3b6db"/><stop offset="0.06" stop-color="#a9b7d5"/><stop offset="0.08" stop-color="#b2b9ce"/><stop offset="0.10" stop-color="#bbbac5"/><stop offset="0.12" stop-color="#c3bbbd"/><stop offset="0.14" stop-color="#cbbcb5"/><stop offset="0.16" stop-color="#d0bbaf"/><stop offset="0.19" stop-color="#d5bba9"/><stop offset="0.22" stop-color="#d6bba9"/><stop offset="0.30" stop-color="#d5bdab"/><stop offset="0.40" stop-color="#d4bfad"/><stop offset="0.50" stop-color="#d3c2b0"/><stop offset="0.60" stop-color="#d4c0ae"/><stop offset="0.70" stop-color="#d5beab"/><stop offset="0.76" stop-color="#d6bca9"/><stop offset="0.80" stop-color="#d7bba7"/><stop offset="0.83" stop-color="#d7bba7"/><stop offset="0.86" stop-color="#d7bba7"/><stop offset="0.88" stop-color="#d4bbab"/><stop offset="0.90" stop-color="#cdbcb3"/><stop offset="0.92" stop-color="#c2bbbe"/><stop offset="0.95" stop-color="#aeb8d1"/><stop offset="0.98" stop-color="#a1b5dc"/><stop offset="1.00" stop-color="#9cb3e0"/></linearGradient><linearGradient id="s27" gradientUnits="userSpaceOnUse" x1="481.3" y1="479.2" x2="502.0" y2="654.3"><stop offset="0.00" stop-color="#9cb3e0"/><stop offset="0.02" stop-color="#a0b4dd"/><stop offset="0.04" stop-color="#a3b6db"/><stop offset="0.06" stop-color="#aab7d5"/><stop offset="0.08" stop-color="#b2b9ce"/><stop offset="0.10" stop-color="#bbbac5"/><stop offset="0.12" stop-color="#c4bbbc"/><stop offset="0.14" stop-color="#cbbcb4"/><stop offset="0.16" stop-color="#d0bbaf"/><stop offset="0.19" stop-color="#d5bba9"/><stop offset="0.22" stop-color="#d6bba9"/><stop offset="0.30" stop-color="#d5bdab"/><stop offset="0.40" stop-color="#d4bfad"/><stop offset="0.50" stop-color="#d3c2b0"/><stop offset="0.60" stop-color="#d4c0ae"/><stop offset="0.70" stop-color="#d5beab"/><stop offset="0.76" stop-color="#d6bca9"/><stop offset="0.80" stop-color="#d7bba7"/><stop offset="0.83" stop-color="#d7bba7"/><stop offset="0.86" stop-color="#d7bba7"/><stop offset="0.88" stop-color="#d3bbac"/><stop offset="0.90" stop-color="#ccbcb4"/><stop offset="0.92" stop-color="#c1bbbf"/><stop offset="0.95" stop-color="#aeb8d2"/><stop offset="0.98" stop-color="#a1b5dc"/><stop offset="1.00" stop-color="#9cb3e0"/></linearGradient><linearGradient id="s28" gradientUnits="userSpaceOnUse" x1="502.1" y1="477.2" x2="522.6" y2="651.4"><stop offset="0.00" stop-color="#9cb3e0"/><stop offset="0.02" stop-color="#a0b4dd"/><stop offset="0.04" stop-color="#a4b6da"/><stop offset="0.06" stop-color="#aab7d5"/><stop offset="0.08" stop-color="#b2b9cd"/><stop offset="0.10" stop-color="#bbbac5"/><stop offset="0.12" stop-color="#c4bbbc"/><stop offset="0.14" stop-color="#ccbcb4"/><stop offset="0.16" stop-color="#d1bbae"/><stop offset="0.19" stop-color="#d5bba9"/><stop offset="0.22" stop-color="#d6bba9"/><stop offset="0.30" stop-color="#d5bdab"/><stop offset="0.40" stop-color="#d4bfad"/><stop offset="0.50" stop-color="#d3c2b0"/><stop offset="0.60" stop-color="#d4c0ae"/><stop offset="0.70" stop-color="#d5beab"/><stop offset="0.76" stop-color="#d6bca9"/><stop offset="0.80" stop-color="#d7bba7"/><stop offset="0.83" stop-color="#d7bba7"/><stop offset="0.86" stop-color="#d6bba8"/><stop offset="0.88" stop-color="#d2bbac"/><stop offset="0.90" stop-color="#cbbcb5"/><stop offset="0.92" stop-color="#c0bbc0"/><stop offset="0.95" stop-color="#adb8d2"/><stop offset="0.98" stop-color="#a1b5dc"/><stop offset="1.00" stop-color="#9cb3e0"/></linearGradient><linearGradient id="s29" gradientUnits="userSpaceOnUse" x1="522.8" y1="475.3" x2="543.3" y2="648.5"><stop offset="0.00" stop-color="#9cb3e0"/><stop offset="0.02" stop-color="#a0b4dd"/><stop offset="0.04" stop-color="#a4b6da"/><stop offset="0.06" stop-color="#aab8d5"/><stop offset="0.08" stop-color="#b3b9cd"/><stop offset="0.10" stop-color="#bcbac4"/><stop offset="0.12" stop-color="#c4bbbb"/><stop offset="0.14" stop-color="#ccbcb4"/><stop offset="0.16" stop-color="#d1bbae"/><stop offset="0.19" stop-color="#d5bba9"/><stop offset="0.22" stop-color="#d6bba9"/><stop offset="0.30" stop-color="#d5bdab"/><stop offset="0.40" stop-color="#d4bfad"/><stop offset="0.50" stop-color="#d3c2b0"/><stop offset="0.60" stop-color="#d4c0ae"/><stop offset="0.70" stop-color="#d5beab"/><stop offset="0.76" stop-color="#d6bca9"/><stop offset="0.80" stop-color="#d7bba7"/><stop offset="0.83" stop-color="#d7bba7"/><stop offset="0.86" stop-color="#d6bba8"/><stop offset="0.88" stop-color="#d2bbad"/><stop offset="0.90" stop-color="#cabcb6"/><stop offset="0.92" stop-color="#bfbbc1"/><stop offset="0.95" stop-color="#adb8d3"/><stop offset="0.98" stop-color="#a1b5dc"/><stop offset="1.00" stop-color="#9cb3e0"/></linearGradient><linearGradient id="s30" gradientUnits="userSpaceOnUse" x1="543.6" y1="473.3" x2="563.9" y2="645.6"><stop offset="0.00" stop-color="#9cb3e0"/><stop offset="0.02" stop-color="#a0b4dd"/><stop offset="0.04" stop-color="#a4b6da"/><stop offset="0.06" stop-color="#aab8d5"/><stop offset="0.08" stop-color="#b3b9cd"/><stop offset="0.10" stop-color="#bcbac4"/><stop offset="0.12" stop-color="#c5bbbb"/><stop offset="0.14" stop-color="#ccbcb3"/><stop offset="0.16" stop-color="#d1bbae"/><stop offset="0.19" stop-color="#d6bba8"/><stop offset="0.22" stop-color="#d6bba9"/><stop offset="0.30" stop-color="#d5bdab"/><stop offset="0.40" stop-color="#d4bfad"/><stop offset="0.50" stop-color="#d3c2b0"/><stop offset="0.60" stop-color="#d4c0ae"/><stop offset="0.70" stop-color="#d5beab"/><stop offset="0.76" stop-color="#d6bca9"/><stop offset="0.80" stop-color="#d7bba7"/><stop offset="0.83" stop-color="#d7bba7"/><stop offset="0.86" stop-color="#d6bba8"/><stop offset="0.88" stop-color="#d1bbae"/><stop offset="0.90" stop-color="#c9bcb7"/><stop offset="0.92" stop-color="#bebbc2"/><stop offset="0.95" stop-color="#acb8d3"/><stop offset="0.98" stop-color="#a1b5dc"/><stop offset="1.00" stop-color="#9cb3e0"/></linearGradient><linearGradient id="s31" gradientUnits="userSpaceOnUse" x1="564.3" y1="471.3" x2="584.6" y2="642.6"><stop offset="0.00" stop-color="#9cb3e0"/><stop offset="0.02" stop-color="#a0b4dd"/><stop offset="0.04" stop-color="#a4b6da"/><stop offset="0.06" stop-color="#aab8d5"/><stop offset="0.08" stop-color="#b3b9cd"/><stop offset="0.10" stop-color="#bcbbc4"/><stop offset="0.12" stop-color="#c5bbbb"/><stop offset="0.14" stop-color="#ccbcb3"/><stop offset="0.16" stop-color="#d1bbad"/><stop offset="0.19" stop-color="#d6bba8"/><stop offset="0.22" stop-color="#d6bba9"/><stop offset="0.30" stop-color="#d5bdab"/><stop offset="0.40" stop-color="#d4bfad"/><stop offset="0.50" stop-color="#d3c2b0"/><stop offset="0.60" stop-color="#d4c0ae"/><stop offset="0.70" stop-color="#d5beab"/><stop offset="0.76" stop-color="#d6bca9"/><stop offset="0.80" stop-color="#d7bba7"/><stop offset="0.83" stop-color="#d7bba7"/><stop offset="0.86" stop-color="#d5bba9"/><stop offset="0.88" stop-color="#d0bbaf"/><stop offset="0.90" stop-color="#c8bbb8"/><stop offset="0.92" stop-color="#bdbbc3"/><stop offset="0.95" stop-color="#acb8d3"/><stop offset="0.98" stop-color="#a1b5dd"/><stop offset="1.00" stop-color="#9cb3e0"/></linearGradient><linearGradient id="s32" gradientUnits="userSpaceOnUse" x1="585.1" y1="469.3" x2="605.2" y2="639.7"><stop offset="0.00" stop-color="#9cb3e0"/><stop offset="0.02" stop-color="#a0b4dd"/><stop offset="0.04" stop-color="#a4b6da"/><stop offset="0.06" stop-color="#aab8d5"/><stop offset="0.08" stop-color="#b3b9cc"/><stop offset="0.10" stop-color="#bdbbc3"/><stop offset="0.12" stop-color="#c6bbba"/><stop offset="0.14" stop-color="#cdbcb3"/><stop offset="0.16" stop-color="#d2bbad"/><stop offset="0.19" stop-color="#d6bba8"/><stop offset="0.22" stop-color="#d6bba9"/><stop offset="0.30" stop-color="#d5bdab"/><stop offset="0.40" stop-color="#d4bfad"/><stop offset="0.50" stop-color="#d3c2b0"/><stop offset="0.60" stop-color="#d4c0ae"/><stop offset="0.70" stop-color="#d5beab"/><stop offset="0.76" stop-color="#d6bca9"/><stop offset="0.80" stop-color="#d7bba7"/><stop offset="0.83" stop-color="#d7bba7"/><stop offset="0.86" stop-color="#d5bbaa"/><stop offset="0.88" stop-color="#d0bbb0"/><stop offset="0.90" stop-color="#c7bbb8"/><stop offset="0.92" stop-color="#bcbac4"/><stop offset="0.95" stop-color="#abb8d4"/><stop offset="0.98" stop-color="#a1b5dd"/><stop offset="1.00" stop-color="#9cb3e0"/></linearGradient><linearGradient id="s33" gradientUnits="userSpaceOnUse" x1="605.8" y1="467.3" x2="625.8" y2="636.8"><stop offset="0.00" stop-color="#9cb3e0"/><stop offset="0.02" stop-color="#a0b4dd"/><stop offset="0.04" stop-color="#a4b6da"/><stop offset="0.06" stop-color="#abb8d4"/><stop offset="0.08" stop-color="#b4b9cc"/><stop offset="0.10" stop-color="#bdbbc3"/><stop offset="0.12" stop-color="#c6bbba"/><stop offset="0.14" stop-color="#cdbcb2"/><stop offset="0.16" stop-color="#d2bbad"/><stop offset="0.19" stop-color="#d6bba8"/><stop offset="0.22" stop-color="#d6bba9"/><stop offset="0.30" stop-color="#d5bdab"/><stop offset="0.40" stop-color="#d4bfad"/><stop offset="0.50" stop-color="#d3c2b0"/><stop offset="0.60" stop-color="#d4c0ae"/><stop offset="0.70" stop-color="#d5beab"/><stop offset="0.76" stop-color="#d6bca9"/><stop offset="0.80" stop-color="#d7bba7"/><stop offset="0.83" stop-color="#d7bba7"/><stop offset="0.86" stop-color="#d4bbaa"/><stop offset="0.88" stop-color="#cfbbb0"/><stop offset="0.90" stop-color="#c7bbb9"/><stop offset="0.92" stop-color="#bcbac4"/><stop offset="0.95" stop-color="#abb8d4"/><stop offset="0.98" stop-color="#a1b5dd"/><stop offset="1.00" stop-color="#9cb3e0"/></linearGradient><linearGradient id="s34" gradientUnits="userSpaceOnUse" x1="626.6" y1="465.4" x2="646.5" y2="633.8"><stop offset="0.00" stop-color="#9cb3e0"/><stop offset="0.02" stop-color="#a0b4dd"/><stop offset="0.04" stop-color="#a4b6da"/><stop offset="0.06" stop-color="#abb8d4"/><stop offset="0.08" stop-color="#b4b9cc"/><stop offset="0.10" stop-color="#bdbbc3"/><stop offset="0.12" stop-color="#c6bbba"/><stop offset="0.14" stop-color="#cdbcb2"/><stop offset="0.16" stop-color="#d2bbad"/><stop offset="0.19" stop-color="#d6bba8"/><stop offset="0.22" stop-color="#d6bba9"/><stop offset="0.30" stop-color="#d5bdab"/><stop offset="0.40" stop-color="#d4bfad"/><stop offset="0.50" stop-color="#d3c2b0"/><stop offset="0.60" stop-color="#d4c0ae"/><stop offset="0.70" stop-color="#d5beab"/><stop offset="0.76" stop-color="#d6bca9"/><stop offset="0.80" stop-color="#d7bba7"/><stop offset="0.83" stop-color="#d7bba7"/><stop offset="0.86" stop-color="#d4bbab"/><stop offset="0.88" stop-color="#cebcb1"/><stop offset="0.90" stop-color="#c6bbba"/><stop offset="0.92" stop-color="#bbbac5"/><stop offset="0.95" stop-color="#aab8d5"/><stop offset="0.98" stop-color="#a1b5dd"/><stop offset="1.00" stop-color="#9cb3e0"/></linearGradient><linearGradient id="s35" gradientUnits="userSpaceOnUse" x1="647.3" y1="463.4" x2="667.1" y2="630.9"><stop offset="0.00" stop-color="#9cb3e0"/><stop offset="0.02" stop-color="#a0b4dd"/><stop offset="0.04" stop-color="#a4b6da"/><stop offset="0.06" stop-color="#abb8d4"/><stop offset="0.08" stop-color="#b4b9cc"/><stop offset="0.10" stop-color="#bebbc2"/><stop offset="0.12" stop-color="#c7bbb9"/><stop offset="0.14" stop-color="#cebcb2"/><stop offset="0.16" stop-color="#d2bbac"/><stop offset="0.19" stop-color="#d6bba8"/><stop offset="0.22" stop-color="#d6bba9"/><stop offset="0.30" stop-color="#d5bdab"/><stop offset="0.40" stop-color="#d4bfad"/><stop offset="0.50" stop-color="#d3c2b0"/><stop offset="0.60" stop-color="#d4c0ae"/><stop offset="0.70" stop-color="#d5beab"/><stop offset="0.76" stop-color="#d6bca9"/><stop offset="0.80" stop-color="#d7bba7"/><stop offset="0.83" stop-color="#d7bba7"/><stop offset="0.86" stop-color="#d3bbab"/><stop offset="0.88" stop-color="#cebcb2"/><stop offset="0.90" stop-color="#c5bbbb"/><stop offset="0.92" stop-color="#babac6"/><stop offset="0.95" stop-color="#aab7d5"/><stop offset="0.98" stop-color="#a0b5dd"/><stop offset="1.00" stop-color="#9cb3e0"/></linearGradient><linearGradient id="s36" gradientUnits="userSpaceOnUse" x1="668.1" y1="461.4" x2="687.8" y2="628.0"><stop offset="0.00" stop-color="#9cb3e0"/><stop offset="0.02" stop-color="#a0b5dd"/><stop offset="0.04" stop-color="#a4b6da"/><stop offset="0.06" stop-color="#abb8d4"/><stop offset="0.08" stop-color="#b4b9cb"/><stop offset="0.10" stop-color="#bebbc2"/><stop offset="0.12" stop-color="#c7bbb9"/><stop offset="0.14" stop-color="#cebcb2"/><stop offset="0.16" stop-color="#d2bbac"/><stop offset="0.19" stop-color="#d6bba8"/><stop offset="0.22" stop-color="#d6bba9"/><stop offset="0.30" stop-color="#d5bdab"/><stop offset="0.40" stop-color="#d4bfad"/><stop offset="0.50" stop-color="#d3c2b0"/><stop offset="0.60" stop-color="#d4c0ae"/><stop offset="0.70" stop-color="#d5beab"/><stop offset="0.76" stop-color="#d6bca9"/><stop offset="0.80" stop-color="#d7bba7"/><stop offset="0.83" stop-color="#d7bba7"/><stop offset="0.86" stop-color="#d3bbac"/><stop offset="0.88" stop-color="#cdbcb3"/><stop offset="0.90" stop-color="#c4bbbc"/><stop offset="0.92" stop-color="#b9bac7"/><stop offset="0.95" stop-color="#aab7d5"/><stop offset="0.98" stop-color="#a0b5dd"/><stop offset="1.00" stop-color="#9cb3e0"/></linearGradient><linearGradient id="s37" gradientUnits="userSpaceOnUse" x1="688.9" y1="459.4" x2="708.4" y2="625.1"><stop offset="0.00" stop-color="#9cb3e0"/><stop offset="0.02" stop-color="#a0b5dd"/><stop offset="0.04" stop-color="#a4b6da"/><stop offset="0.06" stop-color="#abb8d4"/><stop offset="0.08" stop-color="#b5b9cb"/><stop offset="0.10" stop-color="#bebbc2"/><stop offset="0.12" stop-color="#c7bbb9"/><stop offset="0.14" stop-color="#cebbb1"/><stop offset="0.16" stop-color="#d3bbac"/><stop offset="0.19" stop-color="#d6bba8"/><stop offset="0.22" stop-color="#d6bba9"/><stop offset="0.30" stop-color="#d5bdab"/><stop offset="0.40" stop-color="#d4bfad"/><stop offset="0.50" stop-color="#d3c2b0"/><stop offset="0.60" stop-color="#d4c0ae"/><stop offset="0.70" stop-color="#d5beab"/><stop offset="0.76" stop-color="#d6bca9"/><stop offset="0.80" stop-color="#d7bba7"/><stop offset="0.83" stop-color="#d7bba7"/><stop offset="0.86" stop-color="#d2bbad"/><stop offset="0.88" stop-color="#ccbcb3"/><stop offset="0.90" stop-color="#c3bbbd"/><stop offset="0.92" stop-color="#b9bac7"/><stop offset="0.95" stop-color="#a9b7d6"/><stop offset="0.98" stop-color="#a0b5dd"/><stop offset="1.00" stop-color="#9cb3e0"/></linearGradient><linearGradient id="s38" gradientUnits="userSpaceOnUse" x1="709.6" y1="457.4" x2="729.1" y2="622.1"><stop offset="0.00" stop-color="#9cb3e0"/><stop offset="0.02" stop-color="#a0b5dd"/><stop offset="0.04" stop-color="#a4b6da"/><stop offset="0.06" stop-color="#acb8d4"/><stop offset="0.08" stop-color="#b5bacb"/><stop offset="0.10" stop-color="#bfbbc1"/><stop offset="0.12" stop-color="#c8bbb8"/><stop offset="0.14" stop-color="#cebbb1"/><stop offset="0.16" stop-color="#d3bbac"/><stop offset="0.19" stop-color="#d6bba8"/><stop offset="0.22" stop-color="#d6bba9"/><stop offset="0.30" stop-color="#d5bdab"/><stop offset="0.40" stop-color="#d4bfad"/><stop offset="0.50" stop-color="#d3c2b0"/><stop offset="0.60" stop-color="#d4c0ae"/><stop offset="0.70" stop-color="#d5beab"/><stop offset="0.76" stop-color="#d6bca9"/><stop offset="0.80" stop-color="#d7bba7"/><stop offset="0.83" stop-color="#d7bba7"/><stop offset="0.86" stop-color="#d2bbad"/><stop offset="0.88" stop-color="#cbbcb4"/><stop offset="0.90" stop-color="#c2bbbe"/><stop offset="0.92" stop-color="#b8bac8"/><stop offset="0.95" stop-color="#a9b7d6"/><stop offset="0.98" stop-color="#a0b5dd"/><stop offset="1.00" stop-color="#9cb3e0"/></linearGradient><linearGradient id="s39" gradientUnits="userSpaceOnUse" x1="730.4" y1="455.5" x2="749.7" y2="619.2"><stop offset="0.00" stop-color="#9cb3e0"/><stop offset="0.02" stop-color="#a0b5dd"/><stop offset="0.04" stop-color="#a4b6da"/><stop offset="0.06" stop-color="#acb8d3"/><stop offset="0.08" stop-color="#b5bacb"/><stop offset="0.10" stop-color="#bfbbc1"/><stop offset="0.12" stop-color="#c8bcb8"/><stop offset="0.14" stop-color="#cfbbb1"/><stop offset="0.16" stop-color="#d3bbab"/><stop offset="0.19" stop-color="#d6bba8"/><stop offset="0.22" stop-color="#d6bba9"/><stop offset="0.30" stop-color="#d5bdab"/><stop offset="0.40" stop-color="#d4bfad"/><stop offset="0.50" stop-color="#d3c2b0"/><stop offset="0.60" stop-color="#d4c0ae"/><stop offset="0.70" stop-color="#d5beab"/><stop offset="0.76" stop-color="#d6bca9"/><stop offset="0.80" stop-color="#d7bba7"/><stop offset="0.83" stop-color="#d6bba8"/><stop offset="0.86" stop-color="#d1bbae"/><stop offset="0.88" stop-color="#cbbcb5"/><stop offset="0.90" stop-color="#c2bbbe"/><stop offset="0.92" stop-color="#b7bac9"/><stop offset="0.95" stop-color="#a9b7d6"/><stop offset="0.98" stop-color="#a0b5dd"/><stop offset="1.00" stop-color="#9cb3e0"/></linearGradient><linearGradient id="s40" gradientUnits="userSpaceOnUse" x1="751.1" y1="453.5" x2="770.3" y2="616.3"><stop offset="0.00" stop-color="#9cb3e0"/><stop offset="0.02" stop-color="#a0b5dd"/><stop offset="0.04" stop-color="#a4b6da"/><stop offset="0.06" stop-color="#acb8d3"/><stop offset="0.08" stop-color="#b6baca"/><stop offset="0.10" stop-color="#c0bbc1"/><stop offset="0.12" stop-color="#c8bcb7"/><stop offset="0.14" stop-color="#cfbbb0"/><stop offset="0.16" stop-color="#d3bbab"/><stop offset="0.19" stop-color="#d6bba8"/><stop offset="0.22" stop-color="#d6bba9"/><stop offset="0.30" stop-color="#d5bdab"/><stop offset="0.40" stop-color="#d4bfad"/><stop offset="0.50" stop-color="#d3c2b0"/><stop offset="0.60" stop-color="#d4c0ae"/><stop offset="0.70" stop-color="#d5beab"/><stop offset="0.76" stop-color="#d6bca9"/><stop offset="0.80" stop-color="#d7bba7"/><stop offset="0.83" stop-color="#d6bba8"/><stop offset="0.86" stop-color="#d0bbaf"/><stop offset="0.88" stop-color="#cabcb6"/><stop offset="0.90" stop-color="#c1bbbf"/><stop offset="0.92" stop-color="#b7bac9"/><stop offset="0.95" stop-color="#a8b7d7"/><stop offset="0.98" stop-color="#a0b5dd"/><stop offset="1.00" stop-color="#9cb3e0"/></linearGradient><linearGradient id="s41" gradientUnits="userSpaceOnUse" x1="771.9" y1="451.5" x2="791.0" y2="613.3"><stop offset="0.00" stop-color="#9cb3e0"/><stop offset="0.02" stop-color="#a0b5dd"/><stop offset="0.04" stop-color="#a5b6da"/><stop offset="0.06" stop-color="#acb8d3"/><stop offset="0.08" stop-color="#b6baca"/><stop offset="0.10" stop-color="#c0bbc0"/><stop offset="0.12" stop-color="#c9bcb7"/><stop offset="0.14" stop-color="#cfbbb0"/><stop offset="0.16" stop-color="#d4bbab"/><stop offset="0.19" stop-color="#d6bba8"/><stop offset="0.22" stop-color="#d6bba9"/><stop offset="0.30" stop-color="#d5bdab"/><stop offset="0.40" stop-color="#d4bfad"/><stop offset="0.50" stop-color="#d3c2b0"/><stop offset="0.60" stop-color="#d4c0ae"/><stop offset="0.70" stop-color="#d5beab"/><stop offset="0.76" stop-color="#d6bca9"/><stop offset="0.80" stop-color="#d7bba7"/><stop offset="0.83" stop-color="#d6bba8"/><stop offset="0.86" stop-color="#d0bbaf"/><stop offset="0.88" stop-color="#c9bcb7"/><stop offset="0.90" stop-color="#c0bbc0"/><stop offset="0.92" stop-color="#b6baca"/><stop offset="0.95" stop-color="#a8b7d7"/><stop offset="0.98" stop-color="#a0b5dd"/><stop offset="1.00" stop-color="#9cb3e0"/></linearGradient><linearGradient id="s42" gradientUnits="userSpaceOnUse" x1="792.6" y1="449.5" x2="811.6" y2="610.4"><stop offset="0.00" stop-color="#9cb3e0"/><stop offset="0.02" stop-color="#a0b5dd"/><stop offset="0.04" stop-color="#a5b6da"/><stop offset="0.06" stop-color="#acb8d3"/><stop offset="0.08" stop-color="#b6baca"/><stop offset="0.10" stop-color="#c0bbc0"/><stop offset="0.12" stop-color="#c9bcb7"/><stop offset="0.14" stop-color="#cfbbb0"/><stop offset="0.16" stop-color="#d4bbab"/><stop offset="0.19" stop-color="#d6bba8"/><stop offset="0.22" stop-color="#d6bba9"/><stop offset="0.30" stop-color="#d5bdab"/><stop offset="0.40" stop-color="#d4bfad"/><stop offset="0.50" stop-color="#d3c2b0"/><stop offset="0.60" stop-color="#d4c0ae"/><stop offset="0.70" stop-color="#d5beab"/><stop offset="0.76" stop-color="#d6bca9"/><stop offset="0.80" stop-color="#d7bba7"/><stop offset="0.83" stop-color="#d6bba9"/><stop offset="0.86" stop-color="#cfbbb0"/><stop offset="0.88" stop-color="#c8bbb7"/><stop offset="0.90" stop-color="#bfbbc1"/><stop offset="0.92" stop-color="#b5baca"/><stop offset="0.95" stop-color="#a8b7d7"/><stop offset="0.98" stop-color="#a0b5dd"/><stop offset="1.00" stop-color="#9cb3e0"/></linearGradient><linearGradient id="s43" gradientUnits="userSpaceOnUse" x1="813.4" y1="447.6" x2="832.3" y2="607.5"><stop offset="0.00" stop-color="#9cb3e0"/><stop offset="0.02" stop-color="#a0b5dd"/><stop offset="0.04" stop-color="#a5b6da"/><stop offset="0.06" stop-color="#adb8d3"/><stop offset="0.08" stop-color="#b7bac9"/><stop offset="0.10" stop-color="#c1bbbf"/><stop offset="0.12" stop-color="#cabcb6"/><stop offset="0.14" stop-color="#d0bbaf"/><stop offset="0.16" stop-color="#d4bbaa"/><stop offset="0.19" stop-color="#d6bba8"/><stop offset="0.22" stop-color="#d6bba9"/><stop offset="0.30" stop-color="#d5bdab"/><stop offset="0.40" stop-color="#d4bfad"/><stop offset="0.50" stop-color="#d3c2b0"/><stop offset="0.60" stop-color="#d4c0ae"/><stop offset="0.70" stop-color="#d5beab"/><stop offset="0.76" stop-color="#d6bca9"/><stop offset="0.80" stop-color="#d7bba7"/><stop offset="0.83" stop-color="#d5bba9"/><stop offset="0.86" stop-color="#cfbcb1"/><stop offset="0.88" stop-color="#c8bbb8"/><stop offset="0.90" stop-color="#bfbbc1"/><stop offset="0.92" stop-color="#b5b9cb"/><stop offset="0.95" stop-color="#a7b7d7"/><stop offset="0.98" stop-color="#a0b5dd"/><stop offset="1.00" stop-color="#9cb3e0"/></linearGradient><linearGradient id="s44" gradientUnits="userSpaceOnUse" x1="834.1" y1="445.6" x2="852.9" y2="604.6"><stop offset="0.00" stop-color="#9cb3e0"/><stop offset="0.02" stop-color="#a0b5dd"/><stop offset="0.04" stop-color="#a5b6d9"/><stop offset="0.06" stop-color="#adb8d2"/><stop offset="0.08" stop-color="#b7bac9"/><stop offset="0.10" stop-color="#c1bbbf"/><stop offset="0.12" stop-color="#cabcb6"/><stop offset="0.14" stop-color="#d0bbaf"/><stop offset="0.16" stop-color="#d4bbaa"/><stop offset="0.19" stop-color="#d6bba8"/><stop offset="0.22" stop-color="#d6bba9"/><stop offset="0.30" stop-color="#d5bdab"/><stop offset="0.40" stop-color="#d4bfad"/><stop offset="0.50" stop-color="#d3c2b0"/><stop offset="0.60" stop-color="#d4c0ae"/><stop offset="0.70" stop-color="#d5beab"/><stop offset="0.76" stop-color="#d6bca9"/><stop offset="0.80" stop-color="#d7bba7"/><stop offset="0.83" stop-color="#d5bba9"/><stop offset="0.86" stop-color="#cebcb1"/><stop offset="0.88" stop-color="#c7bbb9"/><stop offset="0.90" stop-color="#bebbc2"/><stop offset="0.92" stop-color="#b4b9cc"/><stop offset="0.95" stop-color="#a7b7d8"/><stop offset="0.98" stop-color="#a0b4dd"/><stop offset="1.00" stop-color="#9cb3e0"/></linearGradient><linearGradient id="s45" gradientUnits="userSpaceOnUse" x1="854.9" y1="443.6" x2="873.5" y2="601.6"><stop offset="0.00" stop-color="#9cb3e0"/><stop offset="0.02" stop-color="#a0b5dd"/><stop offset="0.04" stop-color="#a5b6d9"/><stop offset="0.06" stop-color="#adb8d2"/><stop offset="0.08" stop-color="#b7bac9"/><stop offset="0.10" stop-color="#c1bbbf"/><stop offset="0.12" stop-color="#cabcb5"/><stop offset="0.14" stop-color="#d0bbaf"/><stop offset="0.16" stop-color="#d4bbaa"/><stop offset="0.19" stop-color="#d6bba8"/><stop offset="0.22" stop-color="#d6bba9"/><stop offset="0.30" stop-color="#d5bdab"/><stop offset="0.40" stop-color="#d4bfad"/><stop offset="0.50" stop-color="#d3c2b0"/><stop offset="0.60" stop-color="#d4c0ae"/><stop offset="0.70" stop-color="#d5beab"/><stop offset="0.76" stop-color="#d6bca9"/><stop offset="0.80" stop-color="#d7bba7"/><stop offset="0.83" stop-color="#d4bbaa"/><stop offset="0.86" stop-color="#cebcb2"/><stop offset="0.88" stop-color="#c6bbba"/><stop offset="0.90" stop-color="#bdbbc3"/><stop offset="0.92" stop-color="#b4b9cc"/><stop offset="0.95" stop-color="#a7b7d8"/><stop offset="0.98" stop-color="#a0b4dd"/><stop offset="1.00" stop-color="#9cb3e0"/></linearGradient><linearGradient id="s46" gradientUnits="userSpaceOnUse" x1="875.6" y1="441.6" x2="894.2" y2="598.7"><stop offset="0.00" stop-color="#9cb3e0"/><stop offset="0.02" stop-color="#a0b5dd"/><stop offset="0.04" stop-color="#a5b6d9"/><stop offset="0.06" stop-color="#adb8d2"/><stop offset="0.08" stop-color="#b7bac8"/><stop offset="0.10" stop-color="#c2bbbe"/><stop offset="0.12" stop-color="#cbbcb5"/><stop offset="0.14" stop-color="#d1bbae"/><stop offset="0.16" stop-color="#d5bbaa"/><stop offset="0.19" stop-color="#d6bba8"/><stop offset="0.22" stop-color="#d6bba9"/><stop offset="0.30" stop-color="#d5bdab"/><stop offset="0.40" stop-color="#d4bfad"/><stop offset="0.50" stop-color="#d3c2b0"/><stop offset="0.60" stop-color="#d4c0ae"/><stop offset="0.70" stop-color="#d5beab"/><stop offset="0.76" stop-color="#d6bca9"/><stop offset="0.80" stop-color="#d7bba7"/><stop offset="0.83" stop-color="#d4bbaa"/><stop offset="0.86" stop-color="#cdbcb3"/><stop offset="0.88" stop-color="#c6bbba"/><stop offset="0.90" stop-color="#bdbac3"/><stop offset="0.92" stop-color="#b3b9cd"/><stop offset="0.95" stop-color="#a7b7d8"/><stop offset="0.98" stop-color="#a0b4dd"/><stop offset="1.00" stop-color="#9cb3e0"/></linearGradient><linearGradient id="s47" gradientUnits="userSpaceOnUse" x1="896.4" y1="439.6" x2="914.8" y2="595.8"><stop offset="0.00" stop-color="#9cb3e0"/><stop offset="0.02" stop-color="#a0b5dd"/><stop offset="0.04" stop-color="#a5b6d9"/><stop offset="0.06" stop-color="#adb8d2"/><stop offset="0.08" stop-color="#b8bac8"/><stop offset="0.10" stop-color="#c2bbbe"/><stop offset="0.12" stop-color="#cbbcb5"/><stop offset="0.14" stop-color="#d1bbae"/><stop offset="0.16" stop-color="#d5bba9"/><stop offset="0.19" stop-color="#d6bba8"/><stop offset="0.22" stop-color="#d6bba9"/><stop offset="0.30" stop-color="#d5bdab"/><stop offset="0.40" stop-color="#d4bfad"/><stop offset="0.50" stop-color="#d3c2b0"/><stop offset="0.60" stop-color="#d4c0ae"/><stop offset="0.70" stop-color="#d5beab"/><stop offset="0.76" stop-color="#d6bca9"/><stop offset="0.80" stop-color="#d7bba7"/><stop offset="0.83" stop-color="#d4bbab"/><stop offset="0.86" stop-color="#ccbcb3"/><stop offset="0.88" stop-color="#c5bbbb"/><stop offset="0.90" stop-color="#bcbac4"/><stop offset="0.92" stop-color="#b3b9cd"/><stop offset="0.95" stop-color="#a6b7d8"/><stop offset="0.98" stop-color="#a0b4dd"/><stop offset="1.00" stop-color="#9cb3e0"/></linearGradient><linearGradient id="s48" gradientUnits="userSpaceOnUse" x1="917.1" y1="437.7" x2="935.5" y2="592.8"><stop offset="0.00" stop-color="#9cb3e0"/><stop offset="0.02" stop-color="#a0b5dd"/><stop offset="0.04" stop-color="#a5b6d9"/><stop offset="0.06" stop-color="#aeb8d2"/><stop offset="0.08" stop-color="#b8bac8"/><stop offset="0.10" stop-color="#c3bbbd"/><stop offset="0.12" stop-color="#cbbcb4"/><stop offset="0.14" stop-color="#d1bbae"/><stop offset="0.16" stop-color="#d5bba9"/><stop offset="0.19" stop-color="#d6bba8"/><stop offset="0.22" stop-color="#d6bba9"/><stop offset="0.30" stop-color="#d5bdab"/><stop offset="0.40" stop-color="#d4bfad"/><stop offset="0.50" stop-color="#d3c2b0"/><stop offset="0.60" stop-color="#d4c0ae"/><stop offset="0.70" stop-color="#d5beab"/><stop offset="0.76" stop-color="#d6bca9"/><stop offset="0.80" stop-color="#d7bba7"/><stop offset="0.83" stop-color="#d3bbab"/><stop offset="0.86" stop-color="#ccbcb4"/><stop offset="0.88" stop-color="#c4bbbc"/><stop offset="0.90" stop-color="#bbbac5"/><stop offset="0.92" stop-color="#b2b9ce"/><stop offset="0.95" stop-color="#a6b7d8"/><stop offset="0.98" stop-color="#a0b4dd"/><stop offset="1.00" stop-color="#9cb3e0"/></linearGradient><linearGradient id="s49" gradientUnits="userSpaceOnUse" x1="937.9" y1="435.7" x2="956.1" y2="589.9"><stop offset="0.00" stop-color="#9cb3e0"/><stop offset="0.02" stop-color="#a0b5dd"/><stop offset="0.04" stop-color="#a5b6d9"/><stop offset="0.06" stop-color="#aeb8d1"/><stop offset="0.08" stop-color="#b9bac7"/><stop offset="0.10" stop-color="#c3bbbd"/><stop offset="0.12" stop-color="#ccbcb4"/><stop offset="0.14" stop-color="#d1bbad"/><stop offset="0.16" stop-color="#d5bba9"/><stop offset="0.19" stop-color="#d6bba8"/><stop offset="0.22" stop-color="#d6bba9"/><stop offset="0.30" stop-color="#d5bdab"/><stop offset="0.40" stop-color="#d4bfad"/><stop offset="0.50" stop-color="#d3c2b0"/><stop offset="0.60" stop-color="#d4c0ae"/><stop offset="0.70" stop-color="#d5beab"/><stop offset="0.76" stop-color="#d6bca9"/><stop offset="0.80" stop-color="#d7bba7"/><stop offset="0.83" stop-color="#d3bbac"/><stop offset="0.86" stop-color="#cbbcb5"/><stop offset="0.88" stop-color="#c3bbbd"/><stop offset="0.90" stop-color="#bbbac5"/><stop offset="0.92" stop-color="#b2b9ce"/><stop offset="0.95" stop-color="#a6b7d9"/><stop offset="0.98" stop-color="#a0b4dd"/><stop offset="1.00" stop-color="#9cb3e0"/></linearGradient><linearGradient id="s50" gradientUnits="userSpaceOnUse" x1="958.6" y1="433.7" x2="976.7" y2="587.0"><stop offset="0.00" stop-color="#9cb3e0"/><stop offset="0.02" stop-color="#a0b5dd"/><stop offset="0.04" stop-color="#a5b6d9"/><stop offset="0.06" stop-color="#aeb8d1"/><stop offset="0.08" stop-color="#b9bac7"/><stop offset="0.10" stop-color="#c3bbbd"/><stop offset="0.12" stop-color="#ccbcb3"/><stop offset="0.14" stop-color="#d2bbad"/><stop offset="0.16" stop-color="#d5bba9"/><stop offset="0.19" stop-color="#d6bba8"/><stop offset="0.22" stop-color="#d6bba9"/><stop offset="0.30" stop-color="#d5bdab"/><stop offset="0.40" stop-color="#d4bfad"/><stop offset="0.50" stop-color="#d3c2b0"/><stop offset="0.60" stop-color="#d4c0ae"/><stop offset="0.70" stop-color="#d5beab"/><stop offset="0.76" stop-color="#d6bca9"/><stop offset="0.80" stop-color="#d7bba8"/><stop offset="0.83" stop-color="#d2bbad"/><stop offset="0.86" stop-color="#cabcb5"/><stop offset="0.88" stop-color="#c3bbbd"/><stop offset="0.90" stop-color="#babac6"/><stop offset="0.92" stop-color="#b1b9ce"/><stop offset="0.95" stop-color="#a6b6d9"/><stop offset="0.98" stop-color="#a0b4dd"/><stop offset="1.00" stop-color="#9cb3e0"/></linearGradient><linearGradient id="s51" gradientUnits="userSpaceOnUse" x1="979.4" y1="431.7" x2="997.4" y2="584.1"><stop offset="0.00" stop-color="#9cb3e0"/><stop offset="0.02" stop-color="#a0b5dd"/><stop offset="0.04" stop-color="#a6b6d9"/><stop offset="0.06" stop-color="#aeb8d1"/><stop offset="0.08" stop-color="#b9bac7"/><stop offset="0.10" stop-color="#c4bbbc"/><stop offset="0.12" stop-color="#ccbcb3"/><stop offset="0.14" stop-color="#d2bbad"/><stop offset="0.16" stop-color="#d5bba9"/><stop offset="0.19" stop-color="#d6bba8"/><stop offset="0.22" stop-color="#d6bba9"/><stop offset="0.30" stop-color="#d5bdab"/><stop offset="0.40" stop-color="#d4bfad"/><stop offset="0.50" stop-color="#d3c2b0"/><stop offset="0.60" stop-color="#d4c0ae"/><stop offset="0.70" stop-color="#d5beab"/><stop offset="0.76" stop-color="#d6bca9"/><stop offset="0.80" stop-color="#d6bba8"/><stop offset="0.83" stop-color="#d2bbad"/><stop offset="0.86" stop-color="#cabcb6"/><stop offset="0.88" stop-color="#c2bbbe"/><stop offset="0.90" stop-color="#b9bac7"/><stop offset="0.92" stop-color="#b1b9cf"/><stop offset="0.95" stop-color="#a6b6d9"/><stop offset="0.98" stop-color="#a0b4dd"/><stop offset="1.00" stop-color="#9cb3e0"/></linearGradient><linearGradient id="s52" gradientUnits="userSpaceOnUse" x1="1000.2" y1="429.7" x2="1018.0" y2="581.1"><stop offset="0.00" stop-color="#9cb3e0"/><stop offset="0.02" stop-color="#a0b5dd"/><stop offset="0.04" stop-color="#a6b6d9"/><stop offset="0.06" stop-color="#afb8d1"/><stop offset="0.08" stop-color="#babac6"/><stop offset="0.10" stop-color="#c4bbbc"/><stop offset="0.12" stop-color="#cdbcb3"/><stop offset="0.14" stop-color="#d2bbac"/><stop offset="0.16" stop-color="#d6bba9"/><stop offset="0.19" stop-color="#d6bba8"/><stop offset="0.22" stop-color="#d6bba9"/><stop offset="0.30" stop-color="#d5bdab"/><stop offset="0.40" stop-color="#d4bfad"/><stop offset="0.50" stop-color="#d3c2b0"/><stop offset="0.60" stop-color="#d4c0ae"/><stop offset="0.70" stop-color="#d5beab"/><stop offset="0.76" stop-color="#d6bca9"/><stop offset="0.80" stop-color="#d6bba8"/><stop offset="0.83" stop-color="#d1bbae"/><stop offset="0.86" stop-color="#c9bcb7"/><stop offset="0.88" stop-color="#c1bbbf"/><stop offset="0.90" stop-color="#b9bac7"/><stop offset="0.92" stop-color="#b0b9cf"/><stop offset="0.95" stop-color="#a5b6d9"/><stop offset="0.98" stop-color="#9fb4dd"/><stop offset="1.00" stop-color="#9cb3e0"/></linearGradient><linearGradient id="s53" gradientUnits="userSpaceOnUse" x1="1020.9" y1="427.8" x2="1038.7" y2="578.2"><stop offset="0.00" stop-color="#9cb3e0"/><stop offset="0.02" stop-color="#a0b5dd"/><stop offset="0.04" stop-color="#a6b7d9"/><stop offset="0.06" stop-color="#afb9d0"/><stop offset="0.08" stop-color="#babac6"/><stop offset="0.10" stop-color="#c5bbbb"/><stop offset="0.12" stop-color="#cdbcb2"/><stop offset="0.14" stop-color="#d2bbac"/><stop offset="0.16" stop-color="#d6bba8"/><stop offset="0.19" stop-color="#d6bba8"/><stop offset="0.22" stop-color="#d6bba9"/><stop offset="0.30" stop-color="#d5bdab"/><stop offset="0.40" stop-color="#d4bfad"/><stop offset="0.50" stop-color="#d3c2b0"/><stop offset="0.60" stop-color="#d4c0ae"/><stop offset="0.70" stop-color="#d5beab"/><stop offset="0.76" stop-color="#d6bca9"/><stop offset="0.80" stop-color="#d6bba8"/><stop offset="0.83" stop-color="#d1bbae"/><stop offset="0.86" stop-color="#c8bbb7"/><stop offset="0.88" stop-color="#c1bbbf"/><stop offset="0.90" stop-color="#b8bac8"/><stop offset="0.92" stop-color="#b0b9d0"/><stop offset="0.95" stop-color="#a5b6d9"/><stop offset="0.98" stop-color="#9fb4de"/><stop offset="1.00" stop-color="#9cb3e0"/></linearGradient><linearGradient id="s54" gradientUnits="userSpaceOnUse" x1="1041.7" y1="425.8" x2="1059.3" y2="575.3"><stop offset="0.00" stop-color="#9cb3e0"/><stop offset="0.02" stop-color="#a1b5dd"/><stop offset="0.04" stop-color="#a6b7d9"/><stop offset="0.06" stop-color="#afb9d0"/><stop offset="0.08" stop-color="#babac6"/><stop offset="0.10" stop-color="#c5bbbb"/><stop offset="0.12" stop-color="#cdbcb2"/><stop offset="0.14" stop-color="#d3bbac"/><stop offset="0.16" stop-color="#d6bba8"/><stop offset="0.19" stop-color="#d6bba8"/><stop offset="0.22" stop-color="#d6bba9"/><stop offset="0.30" stop-color="#d5bdab"/><stop offset="0.40" stop-color="#d4bfad"/><stop offset="0.50" stop-color="#d3c2b0"/><stop offset="0.60" stop-color="#d4c0ae"/><stop offset="0.70" stop-color="#d5beab"/><stop offset="0.76" stop-color="#d6bca9"/><stop offset="0.80" stop-color="#d6bba9"/><stop offset="0.83" stop-color="#d0bbaf"/><stop offset="0.86" stop-color="#c8bbb8"/><stop offset="0.88" stop-color="#c0bbc0"/><stop offset="0.90" stop-color="#b8bac8"/><stop offset="0.92" stop-color="#afb9d0"/><stop offset="0.95" stop-color="#a5b6d9"/><stop offset="0.98" stop-color="#9fb4de"/><stop offset="1.00" stop-color="#9cb3e0"/></linearGradient><linearGradient id="s55" gradientUnits="userSpaceOnUse" x1="1062.4" y1="423.8" x2="1080.0" y2="572.4"><stop offset="0.00" stop-color="#9cb3e0"/><stop offset="0.02" stop-color="#a1b5dd"/><stop offset="0.04" stop-color="#a6b7d8"/><stop offset="0.06" stop-color="#b0b9d0"/><stop offset="0.08" stop-color="#bbbac5"/><stop offset="0.10" stop-color="#c5bbbb"/><stop offset="0.12" stop-color="#cebcb2"/><stop offset="0.14" stop-color="#d3bbab"/><stop offset="0.16" stop-color="#d6bba8"/><stop offset="0.19" stop-color="#d6bba8"/><stop offset="0.22" stop-color="#d6bba9"/><stop offset="0.30" stop-color="#d5bdab"/><stop offset="0.40" stop-color="#d4bfad"/><stop offset="0.50" stop-color="#d3c2b0"/><stop offset="0.60" stop-color="#d4c0ae"/><stop offset="0.70" stop-color="#d5beab"/><stop offset="0.76" stop-color="#d6bca9"/><stop offset="0.80" stop-color="#d5bba9"/><stop offset="0.83" stop-color="#d0bbaf"/><stop offset="0.86" stop-color="#c7bbb9"/><stop offset="0.88" stop-color="#c0bbc0"/><stop offset="0.90" stop-color="#b7bac9"/><stop offset="0.92" stop-color="#afb8d0"/><stop offset="0.95" stop-color="#a5b6d9"/><stop offset="0.98" stop-color="#9fb4de"/><stop offset="1.00" stop-color="#9cb3e0"/></linearGradient><linearGradient id="s56" gradientUnits="userSpaceOnUse" x1="1083.2" y1="421.8" x2="1100.6" y2="569.4"><stop offset="0.00" stop-color="#9cb3e0"/><stop offset="0.02" stop-color="#a1b5dd"/><stop offset="0.04" stop-color="#a6b7d8"/><stop offset="0.06" stop-color="#b0b9d0"/><stop offset="0.08" stop-color="#bbbac5"/><stop offset="0.10" stop-color="#c6bbba"/><stop offset="0.12" stop-color="#cebcb1"/><stop offset="0.14" stop-color="#d3bbab"/><stop offset="0.16" stop-color="#d6bba8"/><stop offset="0.19" stop-color="#d6bba8"/><stop offset="0.22" stop-color="#d6bba9"/><stop offset="0.30" stop-color="#d5bdab"/><stop offset="0.40" stop-color="#d4bfad"/><stop offset="0.50" stop-color="#d3c2b0"/><stop offset="0.60" stop-color="#d4c0ae"/><stop offset="0.70" stop-color="#d5beab"/><stop offset="0.76" stop-color="#d6bca9"/><stop offset="0.80" stop-color="#d5bba9"/><stop offset="0.83" stop-color="#cfbbb0"/><stop offset="0.86" stop-color="#c7bbb9"/><stop offset="0.88" stop-color="#bfbbc1"/><stop offset="0.90" stop-color="#b7bac9"/><stop offset="0.92" stop-color="#afb8d1"/><stop offset="0.95" stop-color="#a5b6da"/><stop offset="0.98" stop-color="#9fb4de"/><stop offset="1.00" stop-color="#9cb3e0"/></linearGradient><linearGradient id="s57" gradientUnits="userSpaceOnUse" x1="1103.9" y1="419.8" x2="1121.2" y2="566.5"><stop offset="0.00" stop-color="#9cb3e0"/><stop offset="0.02" stop-color="#a1b5dd"/><stop offset="0.04" stop-color="#a6b7d8"/><stop offset="0.06" stop-color="#b0b9cf"/><stop offset="0.08" stop-color="#bcbac4"/><stop offset="0.10" stop-color="#c6bbba"/><stop offset="0.12" stop-color="#cebbb1"/><stop offset="0.14" stop-color="#d4bbab"/><stop offset="0.16" stop-color="#d6bba8"/><stop offset="0.19" stop-color="#d6bba8"/><stop offset="0.22" stop-color="#d6bba9"/><stop offset="0.30" stop-color="#d5bdab"/><stop offset="0.40" stop-color="#d4bfad"/><stop offset="0.50" stop-color="#d3c2b0"/><stop offset="0.60" stop-color="#d4c0ae"/><stop offset="0.70" stop-color="#d5beab"/><stop offset="0.76" stop-color="#d6bca9"/><stop offset="0.80" stop-color="#d5bbaa"/><stop offset="0.83" stop-color="#cfbbb0"/><stop offset="0.86" stop-color="#c6bbba"/><stop offset="0.88" stop-color="#bebbc2"/><stop offset="0.90" stop-color="#b6baca"/><stop offset="0.92" stop-color="#aeb8d1"/><stop offset="0.95" stop-color="#a5b6da"/><stop offset="0.98" stop-color="#9fb4de"/><stop offset="1.00" stop-color="#9cb3e0"/></linearGradient><linearGradient id="s58" gradientUnits="userSpaceOnUse" x1="1124.7" y1="417.9" x2="1141.9" y2="563.6"><stop offset="0.00" stop-color="#9cb3e0"/><stop offset="0.02" stop-color="#a1b5dd"/><stop offset="0.04" stop-color="#a6b7d8"/><stop offset="0.06" stop-color="#b0b9cf"/><stop offset="0.08" stop-color="#bcbac4"/><stop offset="0.10" stop-color="#c7bbb9"/><stop offset="0.12" stop-color="#cfbbb1"/><stop offset="0.14" stop-color="#d4bbab"/><stop offset="0.16" stop-color="#d6bba8"/><stop offset="0.19" stop-color="#d6bba8"/><stop offset="0.22" stop-color="#d6bba9"/><stop offset="0.30" stop-color="#d5bdab"/><stop offset="0.40" stop-color="#d4bfad"/><stop offset="0.50" stop-color="#d3c2b0"/><stop offset="0.60" stop-color="#d4c0ae"/><stop offset="0.70" stop-color="#d5beab"/><stop offset="0.76" stop-color="#d6bca9"/><stop offset="0.80" stop-color="#d4bbaa"/><stop offset="0.83" stop-color="#cebcb1"/><stop offset="0.86" stop-color="#c5bbbb"/><stop offset="0.88" stop-color="#bebbc2"/><stop offset="0.90" stop-color="#b6baca"/><stop offset="0.92" stop-color="#aeb8d2"/><stop offset="0.95" stop-color="#a4b6da"/><stop offset="0.98" stop-color="#9fb4de"/><stop offset="1.00" stop-color="#9cb3e0"/></linearGradient><linearGradient id="s59" gradientUnits="userSpaceOnUse" x1="1145.4" y1="415.9" x2="1162.5" y2="560.6"><stop offset="0.00" stop-color="#9cb3e0"/><stop offset="0.02" stop-color="#a1b5dd"/><stop offset="0.04" stop-color="#a7b7d8"/><stop offset="0.06" stop-color="#b1b9cf"/><stop offset="0.08" stop-color="#bcbbc4"/><stop offset="0.10" stop-color="#c7bbb9"/><stop offset="0.12" stop-color="#cfbbb0"/><stop offset="0.14" stop-color="#d4bbaa"/><stop offset="0.16" stop-color="#d6bba8"/><stop offset="0.19" stop-color="#d6bba8"/><stop offset="0.22" stop-color="#d6bba9"/><stop offset="0.30" stop-color="#d5bdab"/><stop offset="0.40" stop-color="#d4bfad"/><stop offset="0.50" stop-color="#d3c2b0"/><stop offset="0.60" stop-color="#d4c0ae"/><stop offset="0.70" stop-color="#d5beab"/><stop offset="0.76" stop-color="#d6bca9"/><stop offset="0.80" stop-color="#d4bbab"/><stop offset="0.83" stop-color="#cebcb1"/><stop offset="0.86" stop-color="#c5bbbb"/><stop offset="0.88" stop-color="#bdbbc3"/><stop offset="0.90" stop-color="#b5bacb"/><stop offset="0.92" stop-color="#adb8d2"/><stop offset="0.95" stop-color="#a4b6da"/><stop offset="0.98" stop-color="#9fb4de"/><stop offset="1.00" stop-color="#9cb3e0"/></linearGradient>
</defs>
<g clip-path="url(#vp)">
<polygon points="203.6,505.7 281.0,687.0 261.0,774.0 188.0,593.6" fill="url(#leftg)"/>
<polygon points="281.0,687.0 1267.5,548.0 1224.5,620.0 261.0,774.0" fill="url(#frontg)"/>
<polygon points="203.6,505.7 1155.8,414.9 1267.5,548.0 281.0,687.0" fill="none" stroke="#1a2244" stroke-width="2.2" stroke-linejoin="round"/>
<g clip-path="url(#topc)"><g filter="url(#bl)"><polygon points="200.8,504.1 211.7,503.0 290.9,687.5 279.7,689.1" fill="url(#s0)"/><polygon points="207.6,503.4 218.5,502.4 298.0,686.5 286.7,688.1" fill="url(#s1)"/><polygon points="214.4,502.8 225.3,501.8 305.0,685.5 293.8,687.1" fill="url(#s2)"/><polygon points="221.2,502.1 232.1,501.1 312.1,684.5 300.8,686.1" fill="url(#s3)"/><polygon points="228.0,501.5 238.9,500.5 319.1,683.5 307.9,685.1" fill="url(#s4)"/><polygon points="234.8,500.9 245.7,499.8 326.2,682.5 314.9,684.1" fill="url(#s5)"/><polygon points="241.6,500.2 252.5,499.2 333.2,681.5 322.0,683.1" fill="url(#s6)"/><polygon points="248.4,499.6 259.3,498.5 340.3,680.5 329.0,682.1" fill="url(#s7)"/><polygon points="255.2,498.9 266.1,497.9 347.3,679.5 336.1,681.1" fill="url(#s8)"/><polygon points="262.0,498.3 272.9,497.2 354.4,678.6 343.1,680.1" fill="url(#s9)"/><polygon points="268.8,497.6 279.7,496.6 361.4,677.6 350.1,679.1" fill="url(#s10)"/><polygon points="275.6,497.0 286.5,496.0 368.5,676.6 357.2,678.2" fill="url(#s11)"/><polygon points="282.4,496.3 293.3,495.3 375.5,675.6 364.2,677.2" fill="url(#s12)"/><polygon points="289.2,495.7 300.1,494.7 382.6,674.6 371.3,676.2" fill="url(#s13)"/><polygon points="296.0,495.0 306.9,494.0 389.6,673.6 378.3,675.2" fill="url(#s14)"/><polygon points="302.8,494.4 313.6,493.4 396.7,672.6 385.4,674.2" fill="url(#s15)"/><polygon points="309.6,493.8 320.4,492.7 403.7,671.6 392.4,673.2" fill="url(#s16)"/><polygon points="316.4,493.1 327.2,492.1 410.8,670.6 399.5,672.2" fill="url(#s17)"/><polygon points="323.2,492.5 334.0,491.4 417.8,669.6 406.5,671.2" fill="url(#s18)"/><polygon points="330.0,491.8 340.8,490.8 424.9,668.6 413.6,670.2" fill="url(#s19)"/><polygon points="336.8,491.2 347.6,490.1 431.9,667.6 420.6,669.2" fill="url(#s20)"/><polygon points="339.4,490.9 372.6,487.8 457.8,663.9 423.3,668.8" fill="url(#s21)"/><polygon points="360.1,489.0 393.3,485.8 479.3,660.9 444.9,665.8" fill="url(#s22)"/><polygon points="380.9,487.0 414.1,483.8 500.8,657.9 466.4,662.7" fill="url(#s23)"/><polygon points="401.6,485.0 434.8,481.9 522.3,654.8 487.9,659.7" fill="url(#s24)"/><polygon points="422.4,483.1 455.6,479.9 543.8,651.8 509.4,656.6" fill="url(#s25)"/><polygon points="443.1,481.1 476.3,477.9 565.3,648.7 530.9,653.6" fill="url(#s26)"/><polygon points="463.9,479.1 497.0,476.0 586.8,645.7 552.4,650.6" fill="url(#s27)"/><polygon points="484.6,477.2 517.8,474.0 608.3,642.7 573.9,647.5" fill="url(#s28)"/><polygon points="505.3,475.2 538.5,472.0 629.8,639.6 595.4,644.5" fill="url(#s29)"/><polygon points="526.1,473.2 559.3,470.1 651.3,636.6 616.9,641.4" fill="url(#s30)"/><polygon points="546.8,471.2 580.0,468.1 672.8,633.5 638.4,638.4" fill="url(#s31)"/><polygon points="567.6,469.3 600.8,466.1 694.4,630.5 659.9,635.4" fill="url(#s32)"/><polygon points="588.3,467.3 621.5,464.2 715.9,627.5 681.4,632.3" fill="url(#s33)"/><polygon points="609.1,465.3 642.3,462.2 737.4,624.4 703.0,629.3" fill="url(#s34)"/><polygon points="629.8,463.4 663.0,460.2 758.9,621.4 724.5,626.2" fill="url(#s35)"/><polygon points="650.6,461.4 683.8,458.3 780.4,618.3 746.0,623.2" fill="url(#s36)"/><polygon points="671.3,459.4 704.5,456.3 801.9,615.3 767.5,620.2" fill="url(#s37)"/><polygon points="692.1,457.5 725.2,454.3 823.4,612.3 789.0,617.1" fill="url(#s38)"/><polygon points="712.8,455.5 746.0,452.3 844.9,609.2 810.5,614.1" fill="url(#s39)"/><polygon points="733.5,453.5 766.7,450.4 866.4,606.2 832.0,611.0" fill="url(#s40)"/><polygon points="754.3,451.6 787.5,448.4 887.9,603.1 853.5,608.0" fill="url(#s41)"/><polygon points="775.0,449.6 808.2,446.4 909.4,600.1 875.0,605.0" fill="url(#s42)"/><polygon points="795.8,447.6 829.0,444.5 930.9,597.1 896.5,601.9" fill="url(#s43)"/><polygon points="816.5,445.7 849.7,442.5 952.4,594.0 918.0,598.9" fill="url(#s44)"/><polygon points="837.3,443.7 870.5,440.5 974.0,591.0 939.5,595.8" fill="url(#s45)"/><polygon points="858.0,441.7 891.2,438.6 995.5,587.9 961.1,592.8" fill="url(#s46)"/><polygon points="878.8,439.7 912.0,436.6 1017.0,584.9 982.6,589.8" fill="url(#s47)"/><polygon points="899.5,437.8 932.7,434.6 1038.5,581.9 1004.1,586.7" fill="url(#s48)"/><polygon points="920.3,435.8 953.5,432.7 1060.0,578.8 1025.6,583.7" fill="url(#s49)"/><polygon points="941.0,433.8 974.2,430.7 1081.5,575.8 1047.1,580.6" fill="url(#s50)"/><polygon points="961.7,431.9 994.9,428.7 1103.0,572.7 1068.6,577.6" fill="url(#s51)"/><polygon points="982.5,429.9 1015.7,426.8 1124.5,569.7 1090.1,574.6" fill="url(#s52)"/><polygon points="1003.2,427.9 1036.4,424.8 1146.0,566.7 1111.6,571.5" fill="url(#s53)"/><polygon points="1024.0,426.0 1057.2,422.8 1167.5,563.6 1133.1,568.5" fill="url(#s54)"/><polygon points="1044.7,424.0 1077.9,420.9 1189.0,560.6 1154.6,565.4" fill="url(#s55)"/><polygon points="1065.5,422.0 1098.7,418.9 1210.5,557.5 1176.1,562.4" fill="url(#s56)"/><polygon points="1086.2,420.1 1119.4,416.9 1232.1,554.5 1197.6,559.4" fill="url(#s57)"/><polygon points="1107.0,418.1 1140.2,414.9 1253.6,551.5 1219.1,556.3" fill="url(#s58)"/><polygon points="1127.7,416.1 1160.9,413.0 1275.1,548.4 1240.7,553.3" fill="url(#s59)"/></g></g>
<polyline points="188.0,593.6 261.0,774.0 1224.5,620.0" fill="none" stroke="#b0ccf4" stroke-width="1.3"/>
</g>
</svg>
<svg class="a" style="left:0;top:0" width="1318" height="839" viewBox="0 0 1318 839">
<defs>
<linearGradient id="cbar" x1="0" y1="1" x2="0" y2="0">
<stop offset="0" stop-color="#2236d8"/><stop offset="0.1" stop-color="#4460e6"/><stop offset="0.25" stop-color="#86a6f6"/><stop offset="0.38" stop-color="#bccff8"/><stop offset="0.5" stop-color="#e6e8ee"/><stop offset="0.62" stop-color="#f8cdb6"/><stop offset="0.75" stop-color="#f4a07c"/><stop offset="0.88" stop-color="#e05e4a"/><stop offset="1" stop-color="#bc0c22"/>
</linearGradient>
<filter id="tsh" x="-20%" y="-20%" width="140%" height="140%"><feDropShadow dx="0.8" dy="0.8" stdDeviation="0.9" flood-color="#0a0a30" flood-opacity="0.9"/></filter>
</defs>
<rect x="1201" y="218" width="18" height="238" fill="none" stroke="#0a1a3a" stroke-opacity="0.5" stroke-width="1.2"/>
<rect x="1202" y="219" width="16" height="236" fill="url(#cbar)"/>
<g stroke="#fff" stroke-width="1.1">
<line x1="1215" y1="219.5" x2="1227" y2="219.5"/><line x1="1215" y1="303.5" x2="1227" y2="303.5"/><line x1="1215" y1="386.5" x2="1227" y2="386.5"/><line x1="1215" y1="455.5" x2="1227" y2="455.5"/>
</g>
<g fill="#fff" font-family="Liberation Sans" font-size="16" filter="url(#tsh)">
<text x="1233" y="223" textLength="58" lengthAdjust="spacingAndGlyphs">1.0e+00</text>
<text x="1232" y="307">0.5</text>
<text x="1232" y="390">0</text>
<text x="1232" y="459" textLength="58" lengthAdjust="spacingAndGlyphs">-4.1e-01</text>
<text transform="translate(1309,380) rotate(-90)" textLength="88" lengthAdjust="spacingAndGlyphs">VELOCITY U</text>
</g>
<g stroke-linecap="round">
<line x1="103" y1="831" x2="86" y2="803" stroke="#d8c810" stroke-width="1.3"/>
<line x1="103" y1="831" x2="118" y2="796" stroke="#10e010" stroke-width="1.3"/>
<line x1="103" y1="831" x2="138" y2="827" stroke="#e81010" stroke-width="1.5"/>
</g>
<polygon points="84,800 90.1,804.5 85.3,807.4" fill="#c8b410"/>
<polygon points="119,792.8 118.7,801.4 113.1,799" fill="#10e010"/>
<polygon points="142.4,826 135.9,829.7 135.1,824.1" fill="#a80c0c"/>
<g fill="#fff" font-family="Liberation Sans" font-size="14" filter="url(#tsh)">
<text x="88" y="806">Y</text>
<text x="118" y="801">Z</text>
<text x="137" y="828">X</text>
</g>
</svg>


<!-- window border -->
<div class="a" style="left:0;top:0;width:1318px;height:1px;background:#7c7af2"></div>
<div class="a" style="left:0;top:0;width:1px;height:839px;background:#6a66f0"></div>
<div class="a" style="left:1317px;top:0;width:1px;height:839px;background:#5a52e6"></div>
<div class="a" style="left:0;top:838px;width:1318px;height:1px;background:#5048d8"></div>
</body></html>
